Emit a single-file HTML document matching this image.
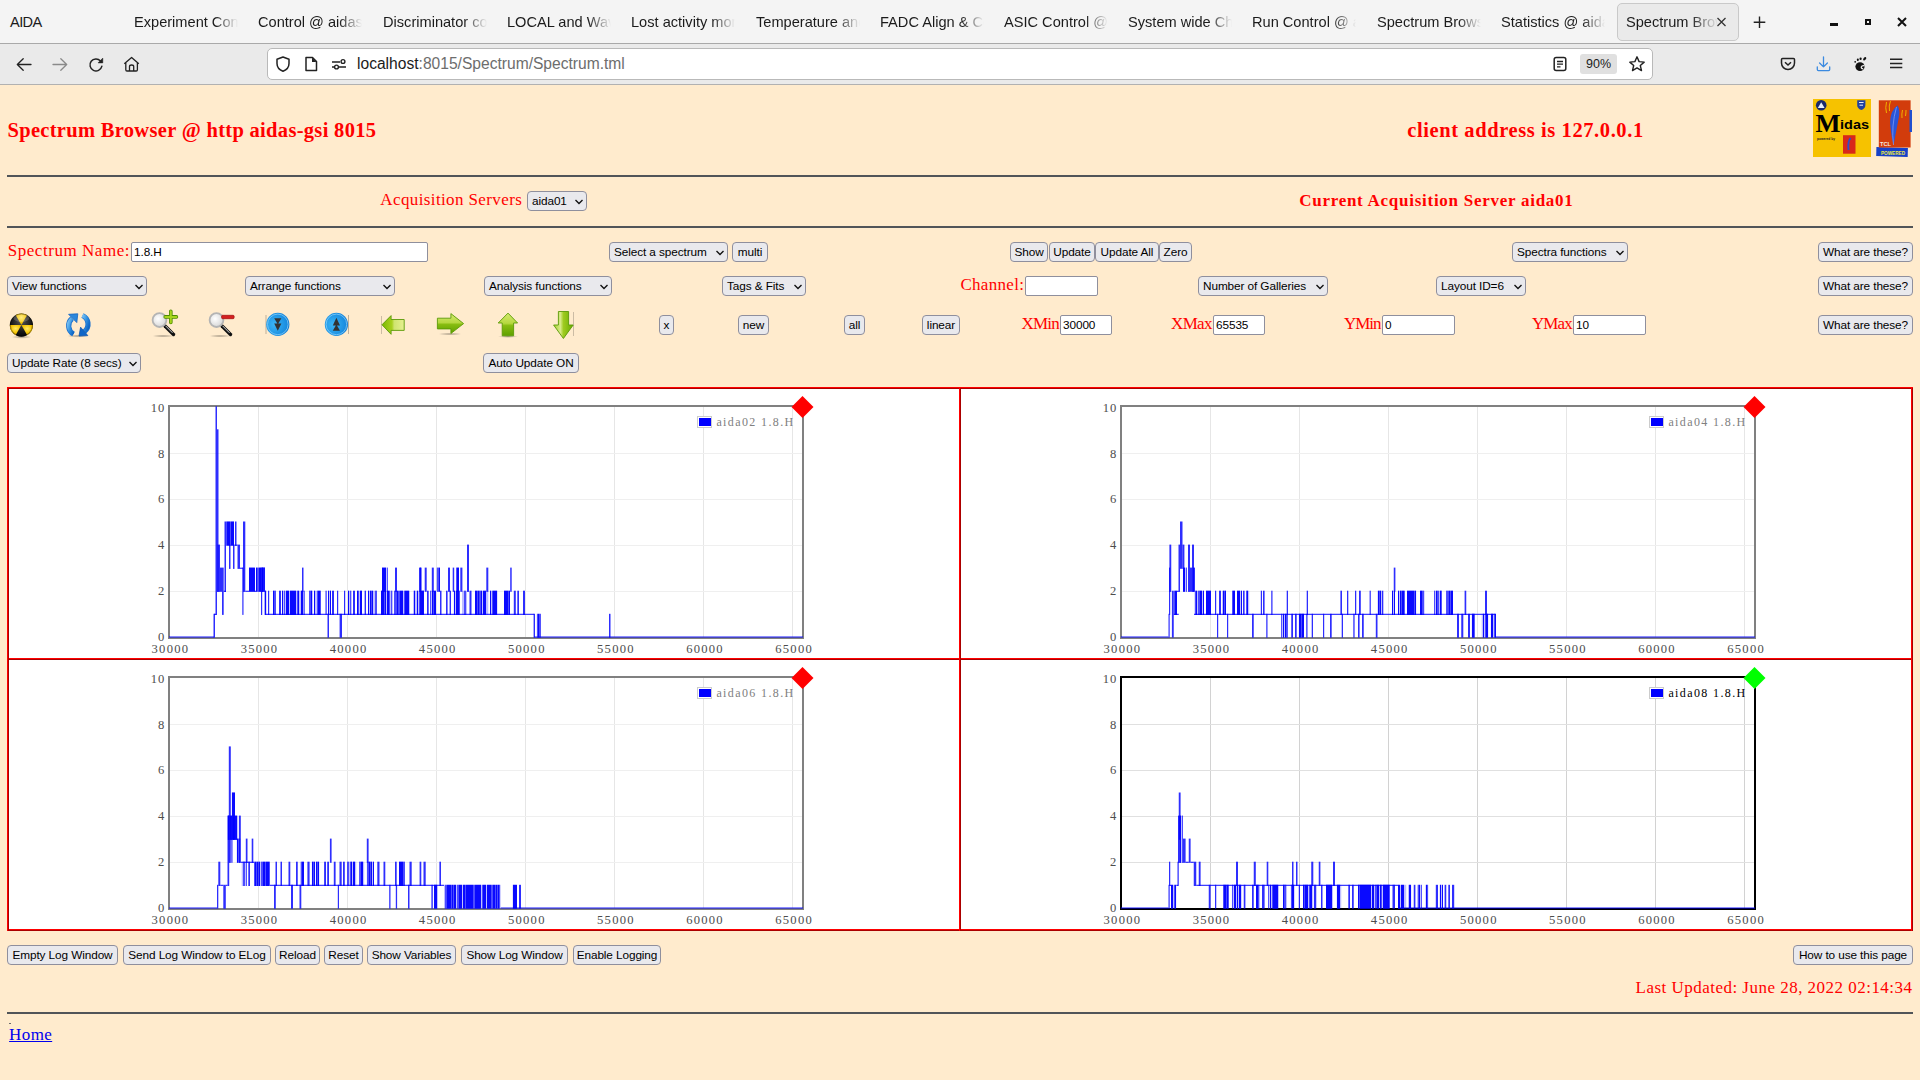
<!DOCTYPE html>
<html><head><meta charset="utf-8"><title>Spectrum Browser</title>
<style>
*{box-sizing:border-box}
html,body{margin:0;padding:0;width:1920px;height:1080px;overflow:hidden;background:#ffebcd;font-family:"Liberation Sans",sans-serif}
.a{position:absolute}
.t{position:absolute;font-family:"Liberation Serif",serif;line-height:1;white-space:nowrap}
.b,.s,.i{position:absolute;border:1px solid #8f8f9d;background:#e9e9ed;font-size:11.8px;letter-spacing:-0.1px;line-height:18px;color:#000;white-space:nowrap}
.b{border-radius:4px;text-align:center}
.s{border-radius:4px;padding-left:4px;overflow:hidden}
.i{background:#fff;border-radius:2px;padding-left:2px}
.chev{position:absolute;top:6px}
.tab{position:absolute;top:0;height:43px;font-size:14.6px;color:#1b1b1b;white-space:nowrap;overflow:hidden}
.tab span{position:absolute;left:0;top:13.7px;line-height:17px;-webkit-mask-image:linear-gradient(to right,#000 0,#000 78%,transparent 100%);width:104px;overflow:hidden;display:block}
.hr{position:absolute;left:7px;width:1906px;height:2px;background:#515458}
.cl{position:absolute;background:#f00}
.cd{position:absolute;background:#a00}
.cell{position:absolute;background:#fff}
</style></head><body>

<div class="a" style="left:0;top:0;width:1920px;height:43px;background:#f4f4f4"></div>
<div class="a" style="left:0;top:43px;width:1920px;height:1px;background:#a9a9a9"></div>
<div class="a" style="left:0;top:44px;width:1920px;height:40px;background:#eaeaea"></div>
<div class="a" style="left:0;top:84px;width:1920px;height:1px;background:#b1b1b1"></div>
<div class="a" style="left:10px;top:13.7px;font-size:14.6px;line-height:17px;color:#1b1b1b;letter-spacing:-0.6px">AIDA</div>
<div class="tab" style="left:134px;width:106px"><span>Experiment Control @ aidas</span></div>
<div class="tab" style="left:258px;width:106px"><span>Control @ aidas-gsi</span></div>
<div class="tab" style="left:383px;width:106px"><span>Discriminator control</span></div>
<div class="tab" style="left:507px;width:106px"><span>LOCAL and Wave</span></div>
<div class="tab" style="left:631px;width:106px"><span>Lost activity monitor</span></div>
<div class="tab" style="left:756px;width:106px"><span>Temperature and</span></div>
<div class="tab" style="left:880px;width:106px"><span>FADC Align &amp; Control</span></div>
<div class="tab" style="left:1004px;width:106px"><span>ASIC Control @ aidas</span></div>
<div class="tab" style="left:1128px;width:106px"><span>System wide Checks</span></div>
<div class="tab" style="left:1252px;width:106px"><span>Run Control @ aidas</span></div>
<div class="tab" style="left:1377px;width:106px"><span>Spectrum Browser</span></div>
<div class="tab" style="left:1501px;width:106px"><span>Statistics @ aidas</span></div>
<div class="a" style="left:1617px;top:3px;width:122px;height:38px;background:#eaeaea;border:1px solid #c9c9c9;border-radius:5px"></div>
<div class="tab" style="left:1626px;width:92px"><span style="width:92px;-webkit-mask-image:linear-gradient(to right,#000 0,#000 70%,transparent 100%)">Spectrum Browser</span></div>
<svg class="a" style="left:1714px;top:15px" width="16" height="14" viewBox="0 0 16 14"><path d="M3.5 3 L11.5 11 M11.5 3 L3.5 11" stroke="#333" stroke-width="1.3"/></svg>
<svg class="a" style="left:1751px;top:14px" width="16" height="16" viewBox="0 0 16 16"><path d="M8.5 2.5 V14 M2.7 8.3 H14.3" stroke="#222" stroke-width="1.4"/></svg>
<div class="a" style="left:1830px;top:23px;width:8px;height:3px;background:#111"></div>
<div class="a" style="left:1865px;top:19px;width:6px;height:6px;border:2px solid #111"></div>
<svg class="a" style="left:1896px;top:16px" width="12" height="12" viewBox="0 0 12 12"><path d="M2 2 L10 10 M10 2 L2 10" stroke="#111" stroke-width="2"/></svg>
<svg class="a" style="left:14px;top:54px" width="20" height="20" viewBox="0 0 20 20"><path d="M17 10.5 H3.5 M9.2 4.8 L3.3 10.5 L9.2 16.2" fill="none" stroke="#222" stroke-width="1.3" stroke-linecap="round" stroke-linejoin="round"/></svg>
<svg class="a" style="left:50px;top:54px" width="20" height="20" viewBox="0 0 20 20"><path d="M3 10.5 H16.5 M10.8 4.8 L16.7 10.5 L10.8 16.2" fill="none" stroke="#8a8a8a" stroke-width="1.3" stroke-linecap="round" stroke-linejoin="round"/></svg>
<svg class="a" style="left:86px;top:54px" width="20" height="20" viewBox="0 0 20 20"><path d="M14.46 6.89 A6.0 6.0 0 1 0 15.82 12.35" fill="none" stroke="#222" stroke-width="1.5" stroke-linecap="round"/><path d="M16.8 4.1 L16.8 8.9 L12 8.9 Z" fill="#222" stroke="#222" stroke-width="0.5" stroke-linejoin="round"/></svg>
<svg class="a" style="left:121px;top:54px" width="20" height="20" viewBox="0 0 20 20"><path d="M3.3 9.8 L10.6 3.4 L17.8 9.8 M4.8 8.8 V15.8 Q4.8 17 6 17 H15.2 Q16.4 17 16.4 15.8 V8.8 M8.5 17 V12.6 Q8.5 11 10.6 11 Q12.7 11 12.7 12.6 V17" fill="none" stroke="#222" stroke-width="1.3" stroke-linejoin="round"/></svg>
<div class="a" style="left:267px;top:48px;width:1386px;height:32px;background:#fff;border:1px solid #b9b9b9;border-radius:5px"></div>
<svg class="a" style="left:274px;top:55px" width="18" height="18" viewBox="0 0 18 18"><path d="M9 2 L15 4.2 V8.5 C15 12.5 12.3 15 9 16.3 C5.7 15 3 12.5 3 8.5 V4.2 Z" fill="none" stroke="#222" stroke-width="1.5" stroke-linejoin="round"/></svg>
<svg class="a" style="left:303px;top:55px" width="16" height="18" viewBox="0 0 16 18"><path d="M3 2.5 H9.5 L13.5 6.5 V15.5 H3 Z" fill="none" stroke="#222" stroke-width="1.5" stroke-linejoin="round"/><path d="M9 2.5 V7 H13.5" fill="#222"/></svg>
<svg class="a" style="left:330px;top:55px" width="18" height="18" viewBox="0 0 18 18"><path d="M2 7 H10 M2 12 H4 M9 12 H16" stroke="#222" stroke-width="1.5"/><circle cx="13" cy="6.5" r="1.9" fill="none" stroke="#222" stroke-width="1.4"/><circle cx="6.5" cy="12" r="1.9" fill="none" stroke="#222" stroke-width="1.4"/></svg>
<div class="a" style="left:357px;top:55px;font-size:15.6px;line-height:17px;color:#1b1b1b;white-space:nowrap">localhost<span style="color:#6d6d6d">:8015/Spectrum/Spectrum.tml</span></div>
<svg class="a" style="left:1551px;top:55px" width="18" height="18" viewBox="0 0 18 18"><rect x="3.2" y="2.5" width="11.6" height="13" rx="2" fill="none" stroke="#222" stroke-width="1.5"/><path d="M6 6.5 H12 M6 9.2 H12 M6 11.9 H9.5" stroke="#222" stroke-width="1.3"/></svg>
<div class="a" style="left:1580px;top:54px;width:37px;height:20px;background:#e0e0e0;border-radius:3px;font-size:12.5px;line-height:20px;text-align:center;color:#1b1b1b">90%</div>
<svg class="a" style="left:1628px;top:55px" width="18" height="18" viewBox="0 0 18 18"><path d="M9 1.8 L11.1 6.6 L16.2 7.1 L12.3 10.5 L13.5 15.6 L9 12.9 L4.5 15.6 L5.7 10.5 L1.8 7.1 L6.9 6.6 Z" fill="none" stroke="#222" stroke-width="1.4" stroke-linejoin="round"/></svg>
<svg class="a" style="left:1779px;top:55px" width="18" height="18" viewBox="0 0 18 18"><path d="M3.5 3.5 H14.5 Q15.5 3.5 15.5 4.5 V8 A6.5 6.5 0 0 1 2.5 8 V4.5 Q2.5 3.5 3.5 3.5 Z" fill="none" stroke="#222" stroke-width="1.5"/><path d="M6 7.2 L9 10 L12 7.2" fill="none" stroke="#222" stroke-width="1.5"/></svg>
<svg class="a" style="left:1814px;top:55px" width="18" height="18" viewBox="0 0 18 18"><path d="M9.5 2 V11.8 M5.6 8 L9.5 11.9 L13.4 8 M3.3 11.8 V14.5 Q3.3 15.6 4.4 15.6 H14.6 Q15.7 15.6 15.7 14.5 V11.8" fill="none" stroke="#3b8ae0" stroke-width="1.3" stroke-linecap="round" stroke-linejoin="round"/></svg>
<svg class="a" style="left:1851px;top:55px" width="18" height="18" viewBox="0 0 18 18"><ellipse cx="9" cy="11.6" rx="4.6" ry="4.4" fill="#111"/><path d="M13.6 10.8 Q11 10.2 10.3 12 Q10 13.6 12.2 13.8" fill="none" stroke="#eaeaea" stroke-width="1.3"/><circle cx="4.2" cy="6.8" r="0.9" fill="#111"/><ellipse cx="6.8" cy="4.8" rx="1" ry="1.2" fill="#111"/><ellipse cx="9.6" cy="3.7" rx="1.1" ry="1.3" fill="#111"/><ellipse cx="13.7" cy="3.7" rx="1.2" ry="2" transform="rotate(40 13.7 3.7)" fill="#111"/></svg>
<svg class="a" style="left:1887px;top:55px" width="18" height="18" viewBox="0 0 18 18"><path d="M3 4.3 H15.3 M3 8.5 H15.3 M3 12.5 H15.3" stroke="#222" stroke-width="1.4"/></svg>
<div class="t" style="left:7.5px;top:120.13px;font-size:20.5px;font-weight:bold;letter-spacing:0.307px;color:#f00;">Spectrum Browser @ http aidas-gsi 8015</div>
<div class="t" style="left:1407.3px;top:120.03px;font-size:20.5px;font-weight:bold;letter-spacing:0.588px;color:#f00;">client address is 127.0.0.1</div>
<div class="hr" style="top:175px"></div>
<div class="t" style="left:380.3px;top:190.76px;font-size:17px;font-weight:normal;letter-spacing:0.387px;color:#f00;">Acquisition Servers</div>
<div class="s" style="left:527px;top:191px;width:60px;height:20px"><span>aida01</span><svg class="chev" style="left:46px" width="10" height="8" viewBox="0 0 10 8"><path d="M1.5 2 L5 5.5 L8.5 2" fill="none" stroke="#111" stroke-width="1.35"/></svg></div>
<div class="t" style="left:1299.2px;top:191.56px;font-size:17px;font-weight:bold;letter-spacing:0.735px;color:#f00;">Current Acquisition Server aida01</div>
<div class="hr" style="top:226px"></div>
<div class="t" style="left:7.75px;top:241.76px;font-size:17px;font-weight:normal;letter-spacing:0.538px;color:#f00;">Spectrum Name:</div>
<div class="i" style="left:131px;top:242px;width:297px;height:20px">1.8.H</div>
<div class="s" style="left:609px;top:242px;width:119px;height:20px"><span>Select a spectrum</span><svg class="chev" style="left:105px" width="10" height="8" viewBox="0 0 10 8"><path d="M1.5 2 L5 5.5 L8.5 2" fill="none" stroke="#111" stroke-width="1.35"/></svg></div>
<div class="b" style="left:732px;top:242px;width:36px;height:20px">multi</div>
<div class="b" style="left:1010px;top:242px;width:38px;height:20px">Show</div>
<div class="b" style="left:1049px;top:242px;width:46px;height:20px">Update</div>
<div class="b" style="left:1095px;top:242px;width:64px;height:20px">Update All</div>
<div class="b" style="left:1159px;top:242px;width:33px;height:20px">Zero</div>
<div class="s" style="left:1512px;top:242px;width:116px;height:20px"><span>Spectra functions</span><svg class="chev" style="left:102px" width="10" height="8" viewBox="0 0 10 8"><path d="M1.5 2 L5 5.5 L8.5 2" fill="none" stroke="#111" stroke-width="1.35"/></svg></div>
<div class="b" style="left:1818px;top:242px;width:95px;height:20px">What are these?</div>
<div class="s" style="left:7px;top:276px;width:140px;height:20px"><span>View functions</span><svg class="chev" style="left:126px" width="10" height="8" viewBox="0 0 10 8"><path d="M1.5 2 L5 5.5 L8.5 2" fill="none" stroke="#111" stroke-width="1.35"/></svg></div>
<div class="s" style="left:245px;top:276px;width:150px;height:20px"><span>Arrange functions</span><svg class="chev" style="left:136px" width="10" height="8" viewBox="0 0 10 8"><path d="M1.5 2 L5 5.5 L8.5 2" fill="none" stroke="#111" stroke-width="1.35"/></svg></div>
<div class="s" style="left:484px;top:276px;width:128px;height:20px"><span>Analysis functions</span><svg class="chev" style="left:114px" width="10" height="8" viewBox="0 0 10 8"><path d="M1.5 2 L5 5.5 L8.5 2" fill="none" stroke="#111" stroke-width="1.35"/></svg></div>
<div class="s" style="left:722px;top:276px;width:84px;height:20px"><span>Tags &amp; Fits</span><svg class="chev" style="left:70px" width="10" height="8" viewBox="0 0 10 8"><path d="M1.5 2 L5 5.5 L8.5 2" fill="none" stroke="#111" stroke-width="1.35"/></svg></div>
<div class="t" style="left:960.4px;top:275.76px;font-size:17px;font-weight:normal;letter-spacing:0.318px;color:#f00;">Channel:</div>
<div class="i" style="left:1025px;top:276px;width:73px;height:20px"></div>
<div class="s" style="left:1198px;top:276px;width:130px;height:20px"><span>Number of Galleries</span><svg class="chev" style="left:116px" width="10" height="8" viewBox="0 0 10 8"><path d="M1.5 2 L5 5.5 L8.5 2" fill="none" stroke="#111" stroke-width="1.35"/></svg></div>
<div class="s" style="left:1436px;top:276px;width:90px;height:20px"><span>Layout ID=6</span><svg class="chev" style="left:76px" width="10" height="8" viewBox="0 0 10 8"><path d="M1.5 2 L5 5.5 L8.5 2" fill="none" stroke="#111" stroke-width="1.35"/></svg></div>
<div class="b" style="left:1818px;top:276px;width:95px;height:20px">What are these?</div>
<div class="b" style="left:659px;top:315px;width:15px;height:20px">x</div>
<div class="b" style="left:738px;top:315px;width:31px;height:20px">new</div>
<div class="b" style="left:844px;top:315px;width:21px;height:20px">all</div>
<div class="b" style="left:922px;top:315px;width:38px;height:20px">linear</div>
<div class="t" style="left:1021.4px;top:314.51px;font-size:17px;font-weight:normal;letter-spacing:-0.736px;color:#f00;">XMin</div>
<div class="i" style="left:1060px;top:315px;width:52px;height:20px">30000</div>
<div class="t" style="left:1171px;top:314.51px;font-size:17px;font-weight:normal;letter-spacing:-0.646px;color:#f00;">XMax</div>
<div class="i" style="left:1213px;top:315px;width:52px;height:20px">65535</div>
<div class="t" style="left:1344px;top:314.51px;font-size:17px;font-weight:normal;letter-spacing:-1.036px;color:#f00;">YMin</div>
<div class="i" style="left:1382px;top:315px;width:73px;height:20px">0</div>
<div class="t" style="left:1531.9px;top:314.51px;font-size:17px;font-weight:normal;letter-spacing:-0.846px;color:#f00;">YMax</div>
<div class="i" style="left:1573px;top:315px;width:73px;height:20px">10</div>
<div class="b" style="left:1818px;top:315px;width:95px;height:20px">What are these?</div>
<svg class="a" style="left:0;top:300px" width="600" height="45" viewBox="0 300 600 45">
<defs>
<radialGradient id="gy" cx="0.5" cy="0.35" r="0.7"><stop offset="0" stop-color="#ffe866"/><stop offset="0.6" stop-color="#f5c400"/><stop offset="1" stop-color="#c99500"/></radialGradient>
<radialGradient id="gk" cx="0.5" cy="0.35" r="0.7"><stop offset="0" stop-color="#555"/><stop offset="0.6" stop-color="#1a1a1a"/><stop offset="1" stop-color="#000"/></radialGradient>
<linearGradient id="gb" x1="0" y1="0" x2="1" y2="1"><stop offset="0" stop-color="#7cc4f4"/><stop offset="0.5" stop-color="#2f8fe0"/><stop offset="1" stop-color="#0a5fc0"/></linearGradient>
<radialGradient id="gbt" cx="0.35" cy="0.5" r="0.75"><stop offset="0" stop-color="#3cb6f6"/><stop offset="0.7" stop-color="#1a8de0"/><stop offset="1" stop-color="#0a6cc8"/></radialGradient>
<linearGradient id="gg" x1="0" y1="0" x2="0" y2="1"><stop offset="0" stop-color="#d5ea70"/><stop offset="0.45" stop-color="#b6d840"/><stop offset="0.55" stop-color="#86bc10"/><stop offset="1" stop-color="#5fa000"/></linearGradient>
<linearGradient id="ggh" x1="0" y1="0" x2="1" y2="0"><stop offset="0" stop-color="#7ab800"/><stop offset="0.45" stop-color="#a9d020"/><stop offset="0.55" stop-color="#cfe470"/><stop offset="1" stop-color="#e6f090"/></linearGradient>
<linearGradient id="ggd" x1="0" y1="0" x2="1" y2="0"><stop offset="0" stop-color="#a6cf30"/><stop offset="0.35" stop-color="#d8ea88"/><stop offset="0.5" stop-color="#9fcb20"/><stop offset="1" stop-color="#6aac00"/></linearGradient>
<radialGradient id="glens" cx="0.4" cy="0.4" r="0.6"><stop offset="0" stop-color="#fff"/><stop offset="1" stop-color="#d8d8d8"/></radialGradient>
<radialGradient id="gsh"><stop offset="0" stop-color="#000" stop-opacity="0.35"/><stop offset="1" stop-color="#000" stop-opacity="0"/></radialGradient>
</defs>
<!-- radiation -->
<ellipse cx="21.5" cy="337" rx="10" ry="1.8" fill="url(#gsh)"/>
<circle cx="21.4" cy="325.1" r="11.6" fill="url(#gk)"/>
<path d="M21.4 325.1 L15.6 315.05 A11.6 11.6 0 0 1 27.2 315.05 Z" fill="url(#gy)"/>
<path d="M21.4 325.1 L9.8 325.1 A11.6 11.6 0 0 0 15.6 335.15 Z" fill="url(#gy)"/>
<path d="M21.4 325.1 L33 325.1 A11.6 11.6 0 0 1 27.2 335.15 Z" fill="url(#gy)"/>
<ellipse cx="21.4" cy="318" rx="8" ry="4" fill="#fff" fill-opacity="0.18"/>
<circle cx="21.4" cy="325.1" r="11.1" fill="none" stroke="#000" stroke-opacity="0.35" stroke-width="1"/>
<!-- refresh -->
<ellipse cx="78" cy="336" rx="11" ry="1.6" fill="url(#gsh)"/>
<path d="M73.5 334 A9.5 9.5 0 0 1 72 318.5" fill="none" stroke="#1f73cf" stroke-width="5.2"/>
<path d="M73.5 334 A9.5 9.5 0 0 1 72 318.5" fill="none" stroke="url(#gb)" stroke-width="3.6"/>
<path d="M68.6 314.3 L77.8 313.8 L76.8 322.6 Z" fill="#2b87dc" stroke="#1565c0" stroke-width="0.8" stroke-linejoin="round"/>
<path d="M82.5 315.5 A9.5 9.5 0 0 1 84.5 331.5" fill="none" stroke="#1f73cf" stroke-width="5.2"/>
<path d="M82.5 315.5 A9.5 9.5 0 0 1 84.5 331.5" fill="none" stroke="url(#gb)" stroke-width="3.6"/>
<path d="M87.8 335.6 L79 336 L80.6 327.2 Z" fill="#0f66c8" stroke="#0b55b0" stroke-width="0.8" stroke-linejoin="round"/>
<!-- zoom in -->
<ellipse cx="163" cy="336" rx="11" ry="1.5" fill="url(#gsh)"/>
<line x1="165" y1="326" x2="173.5" y2="334.5" stroke="#111" stroke-width="3.4" stroke-linecap="round"/>
<line x1="165.5" y1="325.8" x2="172.5" y2="332.8" stroke="#eee" stroke-width="0.9"/>
<circle cx="159.5" cy="320.1" r="6.9" fill="url(#glens)" stroke="#b4b4b4" stroke-width="1.8"/>
<path d="M170.8 311.3 V322.5 M165.2 316.9 H176.4" stroke="#4e8a00" stroke-width="3.6" stroke-linecap="round"/>
<path d="M170.8 311.3 V322.5 M165.2 316.9 H176.4" stroke="#a6d41c" stroke-width="2" stroke-linecap="round"/>
<!-- zoom out -->
<ellipse cx="220" cy="336" rx="11" ry="1.5" fill="url(#gsh)"/>
<line x1="222" y1="326" x2="230.5" y2="334.5" stroke="#111" stroke-width="3.4" stroke-linecap="round"/>
<line x1="222.5" y1="325.8" x2="229.5" y2="332.8" stroke="#eee" stroke-width="0.9"/>
<circle cx="216.5" cy="320.1" r="6.9" fill="url(#glens)" stroke="#b4b4b4" stroke-width="1.8"/>
<rect x="221.6" y="315.3" width="12.5" height="3.4" rx="1" fill="#d42020" stroke="#a01010" stroke-width="0.7"/>
<!-- blue down -->
<line x1="266" y1="315" x2="266" y2="334" stroke="#000" stroke-opacity="0.25" stroke-width="1"/>
<circle cx="277.8" cy="324.4" r="11.6" fill="url(#gbt)"/>
<circle cx="277.8" cy="324.4" r="10.3" fill="none" stroke="#9edcff" stroke-opacity="0.7" stroke-width="0.9"/>
<path d="M274.2 318.3 H281.4 L277.8 324.3 Z M274.2 323.4 H281.4 L277.8 330.8 Z" fill="#333"/>
<!-- blue up -->
<line x1="348.5" y1="315" x2="348.5" y2="334" stroke="#000" stroke-opacity="0.25" stroke-width="1"/>
<circle cx="336.4" cy="324.4" r="11.6" fill="url(#gbt)"/>
<circle cx="336.4" cy="324.4" r="10.3" fill="none" stroke="#9edcff" stroke-opacity="0.7" stroke-width="0.9"/>
<path d="M332.8 330.8 H340 L336.4 324.6 Z M332.8 325.5 H340 L336.4 317.8 Z" fill="#333"/>
<!-- left arrow -->
<line x1="381.5" y1="316" x2="381.5" y2="334" stroke="#000" stroke-opacity="0.2" stroke-width="1"/>
<path d="M382 324.75 L391.1 315.6 V319.5 H404.2 V330.4 H391.1 V334.3 Z" fill="url(#ggh)" stroke="#5a9a08" stroke-width="0.9" stroke-linejoin="round"/>
<!-- right arrow -->
<ellipse cx="450" cy="334" rx="12" ry="1.4" fill="url(#gsh)"/>
<path d="M463.6 323.6 L450.9 313.6 V318.2 H437.4 V328.9 H450.9 V333.5 Z" fill="url(#gg)" stroke="#5a9a08" stroke-width="0.9" stroke-linejoin="round"/>
<!-- up arrow -->
<ellipse cx="508" cy="336.5" rx="10" ry="1.4" fill="url(#gsh)"/>
<path d="M508 313.1 L517.6 323 H513.6 V335.8 H502.2 V323 H498.2 Z" fill="url(#gg)" stroke="#5a9a08" stroke-width="0.9" stroke-linejoin="round"/>
<!-- down arrow -->
<line x1="573.5" y1="312" x2="573.5" y2="336" stroke="#000" stroke-opacity="0.2" stroke-width="1"/>
<path d="M563.4 338.5 L573.2 325 H568.6 V311.5 H558.4 V325 H553.6 Z" fill="url(#ggd)" stroke="#5a9a08" stroke-width="0.9" stroke-linejoin="round"/>
</svg>
<svg class="a" style="left:1800px;top:94px" width="120" height="66" viewBox="1800 94 120 66">
<rect x="1813" y="99" width="58" height="58" fill="#f6c200"/>
<circle cx="1821.2" cy="105.3" r="5.3" fill="#1b2a6b"/>
<path d="M1817.8 108 L1821.2 102.3 L1824.6 108 Z" fill="#e8eef8"/>
<path d="M1857.2 100.2 H1865.4 V105 Q1865.4 108.6 1861.3 110 Q1857.2 108.6 1857.2 105 Z" fill="#2040a0"/>
<path d="M1859 102.5 H1863.6 M1859.5 105.2 H1863 " stroke="#fff" stroke-width="0.9"/>
<text x="1815.5" y="131.5" font-family="Liberation Serif" font-weight="bold" font-size="25" fill="#000" textLength="25" lengthAdjust="spacingAndGlyphs">M</text>
<text x="1840" y="129.3" font-family="Liberation Sans" font-weight="bold" font-size="12.5" fill="#000" textLength="29" lengthAdjust="spacingAndGlyphs">idas</text>
<text x="1817" y="140" font-family="Liberation Sans" font-weight="bold" font-size="3.5" fill="#222" textLength="18" lengthAdjust="spacingAndGlyphs">powered by</text>
<rect x="1843" y="135.2" width="12.5" height="18.5" fill="#d8281a"/>
<path d="M1850.5 138 Q1847.5 142 1848.5 150" stroke="#2a4fd0" stroke-width="1.8" fill="none"/>
<rect x="1876.3" y="147.5" width="31.5" height="9" fill="#1640c8" transform="rotate(1.5 1892 152)"/>
<rect x="1878.8" y="100.3" width="31.8" height="47.2" fill="#d23c0c"/>
<rect x="1909.5" y="110" width="2.5" height="22" fill="#2050d0"/>
<path d="M1897.5 105.5 Q1888.5 112 1890.5 128 Q1891.5 137 1893.5 145 Q1896 132 1898 122 Q1901 110 1897.5 105.5 Z" fill="#2a55d8"/>
<path d="M1893.5 145 Q1891 126 1896.5 107" stroke="#9bb4ff" stroke-width="0.6" fill="none"/>
<path d="M1886.5 102 Q1885 108 1886.5 113 M1890.5 101 Q1888.5 106 1889.5 111 M1902.5 110 Q1901.5 114 1902 118 M1906 110 Q1906 113 1905.5 116" stroke="#f0b000" stroke-width="1" fill="none"/>
<text x="1880" y="146" font-family="Liberation Sans" font-weight="bold" font-size="5.5" fill="#f4e8e0" textLength="11" lengthAdjust="spacingAndGlyphs">TCL</text>
<text x="1881" y="155" font-family="Liberation Sans" font-weight="bold" font-size="6" fill="#f0ea40" textLength="24" lengthAdjust="spacingAndGlyphs">POWERED</text>
</svg>
<div class="s" style="left:7px;top:353px;width:134px;height:20px"><span>Update Rate (8 secs)</span><svg class="chev" style="left:120px" width="10" height="8" viewBox="0 0 10 8"><path d="M1.5 2 L5 5.5 L8.5 2" fill="none" stroke="#111" stroke-width="1.35"/></svg></div>
<div class="b" style="left:483px;top:353px;width:96px;height:20px">Auto Update ON</div>
<div class="cell" style="left:9px;top:389px;width:1902px;height:540px"></div>
<div class="cl" style="left:7px;top:387px;width:1906px;height:1px"></div>
<div class="cd" style="left:8px;top:388px;width:1905px;height:1px"></div>
<div class="cl" style="left:7px;top:658px;width:1906px;height:1px"></div>
<div class="cd" style="left:8px;top:659px;width:1905px;height:1px"></div>
<div class="cl" style="left:7px;top:929px;width:1906px;height:1px"></div>
<div class="cd" style="left:8px;top:930px;width:1905px;height:1px"></div>
<div class="cl" style="left:7px;top:387px;width:1px;height:544px"></div>
<div class="cd" style="left:8px;top:388px;width:1px;height:543px"></div>
<div class="cl" style="left:959px;top:387px;width:1px;height:544px"></div>
<div class="cd" style="left:960px;top:388px;width:1px;height:543px"></div>
<div class="cl" style="left:1911px;top:387px;width:1px;height:544px"></div>
<div class="cd" style="left:1912px;top:388px;width:1px;height:543px"></div>
<div class="b" style="left:7px;top:945px;width:111px;height:20px">Empty Log Window</div>
<div class="b" style="left:123px;top:945px;width:148px;height:20px">Send Log Window to ELog</div>
<div class="b" style="left:275px;top:945px;width:45px;height:20px">Reload</div>
<div class="b" style="left:324px;top:945px;width:39px;height:20px">Reset</div>
<div class="b" style="left:367px;top:945px;width:89px;height:20px">Show Variables</div>
<div class="b" style="left:461px;top:945px;width:107px;height:20px">Show Log Window</div>
<div class="b" style="left:573px;top:945px;width:88px;height:20px">Enable Logging</div>
<div class="b" style="left:1793px;top:945px;width:120px;height:20px">How to use this page</div>
<div class="t" style="left:1635.6px;top:978.86px;font-size:17px;font-weight:normal;letter-spacing:0.478px;color:#f00;">Last Updated: June 28, 2022 02:14:34</div>
<div class="hr" style="top:1012px"></div>
<div class="a" style="left:9px;top:1023px;width:2px;height:1px;background:#6a6a6a"></div>
<div class="t" style="left:9.1px;top:1026.06px;font-size:17px;font-weight:normal;letter-spacing:0.384px;color:#0000ee;text-decoration:underline">Home</div>
<svg class="a" style="left:0;top:0" width="1920" height="1080" viewBox="0 0 1920 1080"><line x1="258.5" y1="407" x2="258.5" y2="637" stroke="#e6e6e6" stroke-width="1"/>
<line x1="347.5" y1="407" x2="347.5" y2="637" stroke="#e6e6e6" stroke-width="1"/>
<line x1="436.5" y1="407" x2="436.5" y2="637" stroke="#e6e6e6" stroke-width="1"/>
<line x1="525.5" y1="407" x2="525.5" y2="637" stroke="#e6e6e6" stroke-width="1"/>
<line x1="614.5" y1="407" x2="614.5" y2="637" stroke="#e6e6e6" stroke-width="1"/>
<line x1="703.5" y1="407" x2="703.5" y2="637" stroke="#e6e6e6" stroke-width="1"/>
<line x1="792.5" y1="407" x2="792.5" y2="637" stroke="#e6e6e6" stroke-width="1"/>
<line x1="170" y1="591.5" x2="802" y2="591.5" stroke="#efefef" stroke-width="1"/>
<line x1="170" y1="545.5" x2="802" y2="545.5" stroke="#efefef" stroke-width="1"/>
<line x1="170" y1="499.5" x2="802" y2="499.5" stroke="#efefef" stroke-width="1"/>
<line x1="170" y1="453.5" x2="802" y2="453.5" stroke="#efefef" stroke-width="1"/>
<rect x="169" y="406" width="634" height="232" fill="none" stroke="#808080" stroke-width="2"/>
<rect x="213.50" y="613.8" width="1.50" height="23.9" fill="#0000ff" fill-opacity="0.82"/>
<rect x="215.50" y="406.3" width="1.50" height="208.7" fill="#0000ff" fill-opacity="0.82"/>
<rect x="217.00" y="429.3" width="1.50" height="162.6" fill="#0000ff" fill-opacity="0.82"/>
<rect x="217.50" y="544.6" width="2.50" height="47.3" fill="#0000ff" fill-opacity="0.82"/>
<rect x="220.00" y="567.6" width="2.00" height="24.2" fill="#0000ff" fill-opacity="0.82"/>
<rect x="222.00" y="567.6" width="1.70" height="47.3" fill="#0000ff" fill-opacity="0.82"/>
<rect x="224.50" y="521.5" width="1.50" height="70.4" fill="#0000ff" fill-opacity="0.82"/>
<rect x="226.00" y="521.5" width="8.00" height="24.2" fill="#0000ff" fill-opacity="0.25"/>
<rect x="226" y="521.5" width="1" height="24.2" fill="#0000ff" fill-opacity="0.6"/>
<rect x="227" y="521.5" width="1" height="24.2" fill="#0000ff" fill-opacity="0.95"/>
<rect x="228" y="521.5" width="1" height="24.2" fill="#0000ff" fill-opacity="0.95"/>
<rect x="229" y="521.5" width="1" height="24.2" fill="#0000ff" fill-opacity="0.95"/>
<rect x="230" y="521.5" width="1" height="24.2" fill="#0000ff" fill-opacity="0.6"/>
<rect x="231" y="521.5" width="1" height="24.2" fill="#0000ff" fill-opacity="0.95"/>
<rect x="232" y="521.5" width="1" height="24.2" fill="#0000ff" fill-opacity="0.95"/>
<rect x="233" y="521.5" width="1" height="24.2" fill="#0000ff" fill-opacity="0.95"/>
<rect x="229.00" y="544.6" width="1.50" height="24.3" fill="#0000ff" fill-opacity="0.82"/>
<rect x="233.00" y="544.6" width="1.50" height="24.3" fill="#0000ff" fill-opacity="0.82"/>
<rect x="235.00" y="521.5" width="1.50" height="24.2" fill="#0000ff" fill-opacity="0.82"/>
<rect x="237.50" y="544.6" width="2.50" height="24.3" fill="#0000ff" fill-opacity="0.82"/>
<rect x="242.30" y="567.6" width="1.20" height="47.3" fill="#0000ff" fill-opacity="0.82"/>
<rect x="243.00" y="521.5" width="2.30" height="70.4" fill="#0000ff" fill-opacity="0.82"/>
<rect x="249.00" y="567.6" width="5.50" height="24.2" fill="#0000ff" fill-opacity="0.25"/>
<rect x="249" y="567.6" width="1" height="24.2" fill="#0000ff" fill-opacity="0.95"/>
<rect x="250" y="567.6" width="1" height="24.2" fill="#0000ff" fill-opacity="0.95"/>
<rect x="251" y="567.6" width="1" height="24.2" fill="#0000ff" fill-opacity="0.95"/>
<rect x="252" y="567.6" width="1" height="24.2" fill="#0000ff" fill-opacity="0.95"/>
<rect x="253" y="567.6" width="1" height="24.2" fill="#0000ff" fill-opacity="0.95"/>
<rect x="254" y="567.6" width="1" height="24.2" fill="#0000ff" fill-opacity="0.95"/>
<rect x="256.00" y="567.6" width="2.60" height="24.2" fill="#0000ff" fill-opacity="0.25"/>
<rect x="256" y="567.6" width="1" height="24.2" fill="#0000ff" fill-opacity="0.95"/>
<rect x="257" y="567.6" width="1" height="24.2" fill="#0000ff" fill-opacity="0.6"/>
<rect x="258" y="567.6" width="1" height="24.2" fill="#0000ff" fill-opacity="0.6"/>
<rect x="259.00" y="567.6" width="6.00" height="24.2" fill="#0000ff" fill-opacity="0.25"/>
<rect x="259" y="567.6" width="1" height="24.2" fill="#0000ff" fill-opacity="0.95"/>
<rect x="260" y="567.6" width="1" height="24.2" fill="#0000ff" fill-opacity="0.95"/>
<rect x="261" y="567.6" width="1" height="24.2" fill="#0000ff" fill-opacity="0.6"/>
<rect x="262" y="567.6" width="1" height="24.2" fill="#0000ff" fill-opacity="0.95"/>
<rect x="263" y="567.6" width="1" height="24.2" fill="#0000ff" fill-opacity="0.6"/>
<rect x="264" y="567.6" width="1" height="24.2" fill="#0000ff" fill-opacity="0.6"/>
<rect x="261.00" y="590.7" width="1.20" height="24.3" fill="#0000ff" fill-opacity="0.82"/>
<rect x="264.60" y="590.7" width="1.40" height="24.3" fill="#0000ff" fill-opacity="0.82"/>
<rect x="265.00" y="590.7" width="1.20" height="24.3" fill="#0000ff" fill-opacity="0.82"/>
<rect x="268.00" y="590.7" width="1.20" height="24.3" fill="#0000ff" fill-opacity="0.82"/>
<rect x="273.00" y="590.7" width="3.00" height="24.3" fill="#0000ff" fill-opacity="0.25"/>
<rect x="273" y="590.7" width="1" height="24.3" fill="#0000ff" fill-opacity="0.95"/>
<rect x="274" y="590.7" width="1" height="24.3" fill="#0000ff" fill-opacity="0.6"/>
<rect x="275" y="590.7" width="1" height="24.3" fill="#0000ff" fill-opacity="0.6"/>
<rect x="279.00" y="590.7" width="2.00" height="24.3" fill="#0000ff" fill-opacity="0.82"/>
<rect x="282.00" y="590.7" width="20.50" height="24.3" fill="#0000ff" fill-opacity="0.25"/>
<rect x="282" y="590.7" width="1" height="24.3" fill="#0000ff" fill-opacity="0.95"/>
<rect x="284" y="590.7" width="1" height="24.3" fill="#0000ff" fill-opacity="0.6"/>
<rect x="286" y="590.7" width="1" height="24.3" fill="#0000ff" fill-opacity="0.95"/>
<rect x="287" y="590.7" width="1" height="24.3" fill="#0000ff" fill-opacity="0.95"/>
<rect x="288" y="590.7" width="1" height="24.3" fill="#0000ff" fill-opacity="0.95"/>
<rect x="290" y="590.7" width="1" height="24.3" fill="#0000ff" fill-opacity="0.95"/>
<rect x="291" y="590.7" width="1" height="24.3" fill="#0000ff" fill-opacity="0.95"/>
<rect x="292" y="590.7" width="1" height="24.3" fill="#0000ff" fill-opacity="0.95"/>
<rect x="293" y="590.7" width="1" height="24.3" fill="#0000ff" fill-opacity="0.95"/>
<rect x="294" y="590.7" width="1" height="24.3" fill="#0000ff" fill-opacity="0.95"/>
<rect x="295" y="590.7" width="1" height="24.3" fill="#0000ff" fill-opacity="0.95"/>
<rect x="297" y="590.7" width="1" height="24.3" fill="#0000ff" fill-opacity="0.6"/>
<rect x="298" y="590.7" width="1" height="24.3" fill="#0000ff" fill-opacity="0.95"/>
<rect x="301" y="590.7" width="1" height="24.3" fill="#0000ff" fill-opacity="0.95"/>
<rect x="302" y="590.7" width="1" height="24.3" fill="#0000ff" fill-opacity="0.95"/>
<rect x="303.50" y="590.7" width="1.20" height="24.3" fill="#0000ff" fill-opacity="0.82"/>
<rect x="309.00" y="590.7" width="4.00" height="24.3" fill="#0000ff" fill-opacity="0.25"/>
<rect x="309" y="590.7" width="1" height="24.3" fill="#0000ff" fill-opacity="0.6"/>
<rect x="310" y="590.7" width="1" height="24.3" fill="#0000ff" fill-opacity="0.6"/>
<rect x="311" y="590.7" width="1" height="24.3" fill="#0000ff" fill-opacity="0.95"/>
<rect x="314.00" y="590.7" width="7.00" height="24.3" fill="#0000ff" fill-opacity="0.25"/>
<rect x="314" y="590.7" width="1" height="24.3" fill="#0000ff" fill-opacity="0.95"/>
<rect x="317" y="590.7" width="1" height="24.3" fill="#0000ff" fill-opacity="0.6"/>
<rect x="318" y="590.7" width="1" height="24.3" fill="#0000ff" fill-opacity="0.95"/>
<rect x="319" y="590.7" width="1" height="24.3" fill="#0000ff" fill-opacity="0.95"/>
<rect x="320" y="590.7" width="1" height="24.3" fill="#0000ff" fill-opacity="0.6"/>
<rect x="325.50" y="590.7" width="1.20" height="24.3" fill="#0000ff" fill-opacity="0.82"/>
<rect x="328.00" y="590.7" width="3.00" height="24.3" fill="#0000ff" fill-opacity="0.25"/>
<rect x="328" y="590.7" width="1" height="24.3" fill="#0000ff" fill-opacity="0.95"/>
<rect x="330" y="590.7" width="1" height="24.3" fill="#0000ff" fill-opacity="0.95"/>
<rect x="332.00" y="590.7" width="2.00" height="24.3" fill="#0000ff" fill-opacity="0.82"/>
<rect x="337.00" y="590.7" width="1.20" height="24.3" fill="#0000ff" fill-opacity="0.82"/>
<rect x="344.00" y="590.7" width="1.20" height="24.3" fill="#0000ff" fill-opacity="0.82"/>
<rect x="348.00" y="590.7" width="4.00" height="24.3" fill="#0000ff" fill-opacity="0.25"/>
<rect x="348" y="590.7" width="1" height="24.3" fill="#0000ff" fill-opacity="0.95"/>
<rect x="350" y="590.7" width="1" height="24.3" fill="#0000ff" fill-opacity="0.6"/>
<rect x="353.00" y="590.7" width="2.00" height="24.3" fill="#0000ff" fill-opacity="0.82"/>
<rect x="357.00" y="590.7" width="5.00" height="24.3" fill="#0000ff" fill-opacity="0.25"/>
<rect x="357" y="590.7" width="1" height="24.3" fill="#0000ff" fill-opacity="0.95"/>
<rect x="358" y="590.7" width="1" height="24.3" fill="#0000ff" fill-opacity="0.6"/>
<rect x="360" y="590.7" width="1" height="24.3" fill="#0000ff" fill-opacity="0.95"/>
<rect x="361" y="590.7" width="1" height="24.3" fill="#0000ff" fill-opacity="0.95"/>
<rect x="364.60" y="590.7" width="1.40" height="24.3" fill="#0000ff" fill-opacity="0.82"/>
<rect x="368.00" y="590.7" width="9.00" height="24.3" fill="#0000ff" fill-opacity="0.25"/>
<rect x="368" y="590.7" width="1" height="24.3" fill="#0000ff" fill-opacity="0.95"/>
<rect x="370" y="590.7" width="1" height="24.3" fill="#0000ff" fill-opacity="0.95"/>
<rect x="371" y="590.7" width="1" height="24.3" fill="#0000ff" fill-opacity="0.6"/>
<rect x="372" y="590.7" width="1" height="24.3" fill="#0000ff" fill-opacity="0.95"/>
<rect x="375" y="590.7" width="1" height="24.3" fill="#0000ff" fill-opacity="0.6"/>
<rect x="376" y="590.7" width="1" height="24.3" fill="#0000ff" fill-opacity="0.6"/>
<rect x="381.00" y="590.7" width="9.00" height="24.3" fill="#0000ff" fill-opacity="0.25"/>
<rect x="381" y="590.7" width="1" height="24.3" fill="#0000ff" fill-opacity="0.95"/>
<rect x="382" y="590.7" width="1" height="24.3" fill="#0000ff" fill-opacity="0.95"/>
<rect x="383" y="590.7" width="1" height="24.3" fill="#0000ff" fill-opacity="0.95"/>
<rect x="384" y="590.7" width="1" height="24.3" fill="#0000ff" fill-opacity="0.6"/>
<rect x="385" y="590.7" width="1" height="24.3" fill="#0000ff" fill-opacity="0.95"/>
<rect x="387" y="590.7" width="1" height="24.3" fill="#0000ff" fill-opacity="0.95"/>
<rect x="388" y="590.7" width="1" height="24.3" fill="#0000ff" fill-opacity="0.95"/>
<rect x="389" y="590.7" width="1" height="24.3" fill="#0000ff" fill-opacity="0.6"/>
<rect x="390.00" y="590.7" width="3.00" height="24.3" fill="#0000ff" fill-opacity="0.25"/>
<rect x="391" y="590.7" width="1" height="24.3" fill="#0000ff" fill-opacity="0.6"/>
<rect x="394.00" y="590.7" width="16.00" height="24.3" fill="#0000ff" fill-opacity="0.25"/>
<rect x="394" y="590.7" width="1" height="24.3" fill="#0000ff" fill-opacity="0.6"/>
<rect x="395" y="590.7" width="1" height="24.3" fill="#0000ff" fill-opacity="0.6"/>
<rect x="396" y="590.7" width="1" height="24.3" fill="#0000ff" fill-opacity="0.6"/>
<rect x="397" y="590.7" width="1" height="24.3" fill="#0000ff" fill-opacity="0.95"/>
<rect x="398" y="590.7" width="1" height="24.3" fill="#0000ff" fill-opacity="0.6"/>
<rect x="399" y="590.7" width="1" height="24.3" fill="#0000ff" fill-opacity="0.6"/>
<rect x="400" y="590.7" width="1" height="24.3" fill="#0000ff" fill-opacity="0.95"/>
<rect x="401" y="590.7" width="1" height="24.3" fill="#0000ff" fill-opacity="0.95"/>
<rect x="402" y="590.7" width="1" height="24.3" fill="#0000ff" fill-opacity="0.95"/>
<rect x="404" y="590.7" width="1" height="24.3" fill="#0000ff" fill-opacity="0.6"/>
<rect x="405" y="590.7" width="1" height="24.3" fill="#0000ff" fill-opacity="0.95"/>
<rect x="406" y="590.7" width="1" height="24.3" fill="#0000ff" fill-opacity="0.95"/>
<rect x="407" y="590.7" width="1" height="24.3" fill="#0000ff" fill-opacity="0.95"/>
<rect x="408" y="590.7" width="1" height="24.3" fill="#0000ff" fill-opacity="0.95"/>
<rect x="413.00" y="590.7" width="8.00" height="24.3" fill="#0000ff" fill-opacity="0.25"/>
<rect x="414" y="590.7" width="1" height="24.3" fill="#0000ff" fill-opacity="0.95"/>
<rect x="417" y="590.7" width="1" height="24.3" fill="#0000ff" fill-opacity="0.95"/>
<rect x="419" y="590.7" width="1" height="24.3" fill="#0000ff" fill-opacity="0.6"/>
<rect x="420" y="590.7" width="1" height="24.3" fill="#0000ff" fill-opacity="0.95"/>
<rect x="260.00" y="567.6" width="5.00" height="24.2" fill="#0000ff" fill-opacity="0.25"/>
<rect x="261" y="567.6" width="1" height="24.2" fill="#0000ff" fill-opacity="0.6"/>
<rect x="262" y="567.6" width="1" height="24.2" fill="#0000ff" fill-opacity="0.95"/>
<rect x="263" y="567.6" width="1" height="24.2" fill="#0000ff" fill-opacity="0.6"/>
<rect x="264" y="567.6" width="1" height="24.2" fill="#0000ff" fill-opacity="0.6"/>
<rect x="302.00" y="567.6" width="1.50" height="24.2" fill="#0000ff" fill-opacity="0.82"/>
<rect x="382.00" y="567.6" width="5.50" height="24.2" fill="#0000ff" fill-opacity="0.25"/>
<rect x="382" y="567.6" width="1" height="24.2" fill="#0000ff" fill-opacity="0.95"/>
<rect x="383" y="567.6" width="1" height="24.2" fill="#0000ff" fill-opacity="0.95"/>
<rect x="384" y="567.6" width="1" height="24.2" fill="#0000ff" fill-opacity="0.95"/>
<rect x="385" y="567.6" width="1" height="24.2" fill="#0000ff" fill-opacity="0.95"/>
<rect x="387" y="567.6" width="1" height="24.2" fill="#0000ff" fill-opacity="0.6"/>
<rect x="395.00" y="567.6" width="2.00" height="24.2" fill="#0000ff" fill-opacity="0.82"/>
<rect x="419.00" y="567.6" width="2.00" height="24.2" fill="#0000ff" fill-opacity="0.82"/>
<rect x="327.50" y="613.8" width="1.50" height="23.9" fill="#0000ff" fill-opacity="0.82"/>
<rect x="339.60" y="613.8" width="2.40" height="23.9" fill="#0000ff" fill-opacity="0.82"/>
<rect x="421.00" y="590.7" width="3.00" height="24.3" fill="#0000ff" fill-opacity="0.25"/>
<rect x="421" y="590.7" width="1" height="24.3" fill="#0000ff" fill-opacity="0.95"/>
<rect x="422" y="590.7" width="1" height="24.3" fill="#0000ff" fill-opacity="0.95"/>
<rect x="423" y="590.7" width="1" height="24.3" fill="#0000ff" fill-opacity="0.6"/>
<rect x="422.60" y="590.7" width="1.40" height="24.3" fill="#0000ff" fill-opacity="0.82"/>
<rect x="427.00" y="590.7" width="1.70" height="24.3" fill="#0000ff" fill-opacity="0.82"/>
<rect x="430.30" y="590.7" width="5.70" height="24.3" fill="#0000ff" fill-opacity="0.25"/>
<rect x="430" y="590.7" width="1" height="24.3" fill="#0000ff" fill-opacity="0.6"/>
<rect x="432" y="590.7" width="1" height="24.3" fill="#0000ff" fill-opacity="0.95"/>
<rect x="433" y="590.7" width="1" height="24.3" fill="#0000ff" fill-opacity="0.6"/>
<rect x="434" y="590.7" width="1" height="24.3" fill="#0000ff" fill-opacity="0.95"/>
<rect x="435" y="590.7" width="1" height="24.3" fill="#0000ff" fill-opacity="0.95"/>
<rect x="440.00" y="590.7" width="1.50" height="24.3" fill="#0000ff" fill-opacity="0.82"/>
<rect x="446.00" y="590.7" width="1.60" height="24.3" fill="#0000ff" fill-opacity="0.82"/>
<rect x="449.60" y="590.7" width="1.40" height="24.3" fill="#0000ff" fill-opacity="0.82"/>
<rect x="453.70" y="590.7" width="6.30" height="24.3" fill="#0000ff" fill-opacity="0.25"/>
<rect x="454" y="590.7" width="1" height="24.3" fill="#0000ff" fill-opacity="0.95"/>
<rect x="456" y="590.7" width="1" height="24.3" fill="#0000ff" fill-opacity="0.95"/>
<rect x="457" y="590.7" width="1" height="24.3" fill="#0000ff" fill-opacity="0.95"/>
<rect x="458" y="590.7" width="1" height="24.3" fill="#0000ff" fill-opacity="0.95"/>
<rect x="459" y="590.7" width="1" height="24.3" fill="#0000ff" fill-opacity="0.6"/>
<rect x="462.00" y="590.7" width="5.00" height="24.3" fill="#0000ff" fill-opacity="0.25"/>
<rect x="464" y="590.7" width="1" height="24.3" fill="#0000ff" fill-opacity="0.6"/>
<rect x="465" y="590.7" width="1" height="24.3" fill="#0000ff" fill-opacity="0.6"/>
<rect x="469.50" y="590.7" width="2.00" height="24.3" fill="#0000ff" fill-opacity="0.82"/>
<rect x="475.00" y="590.7" width="13.30" height="24.3" fill="#0000ff" fill-opacity="0.25"/>
<rect x="475" y="590.7" width="1" height="24.3" fill="#0000ff" fill-opacity="0.95"/>
<rect x="476" y="590.7" width="1" height="24.3" fill="#0000ff" fill-opacity="0.95"/>
<rect x="477" y="590.7" width="1" height="24.3" fill="#0000ff" fill-opacity="0.6"/>
<rect x="478" y="590.7" width="1" height="24.3" fill="#0000ff" fill-opacity="0.95"/>
<rect x="479" y="590.7" width="1" height="24.3" fill="#0000ff" fill-opacity="0.6"/>
<rect x="480" y="590.7" width="1" height="24.3" fill="#0000ff" fill-opacity="0.6"/>
<rect x="481" y="590.7" width="1" height="24.3" fill="#0000ff" fill-opacity="0.95"/>
<rect x="483" y="590.7" width="1" height="24.3" fill="#0000ff" fill-opacity="0.95"/>
<rect x="484" y="590.7" width="1" height="24.3" fill="#0000ff" fill-opacity="0.95"/>
<rect x="485" y="590.7" width="1" height="24.3" fill="#0000ff" fill-opacity="0.95"/>
<rect x="490.40" y="590.7" width="7.10" height="24.3" fill="#0000ff" fill-opacity="0.25"/>
<rect x="490" y="590.7" width="1" height="24.3" fill="#0000ff" fill-opacity="0.95"/>
<rect x="492" y="590.7" width="1" height="24.3" fill="#0000ff" fill-opacity="0.6"/>
<rect x="493" y="590.7" width="1" height="24.3" fill="#0000ff" fill-opacity="0.95"/>
<rect x="494" y="590.7" width="1" height="24.3" fill="#0000ff" fill-opacity="0.95"/>
<rect x="495" y="590.7" width="1" height="24.3" fill="#0000ff" fill-opacity="0.95"/>
<rect x="496" y="590.7" width="1" height="24.3" fill="#0000ff" fill-opacity="0.95"/>
<rect x="504.00" y="590.7" width="5.70" height="24.3" fill="#0000ff" fill-opacity="0.25"/>
<rect x="504" y="590.7" width="1" height="24.3" fill="#0000ff" fill-opacity="0.95"/>
<rect x="505" y="590.7" width="1" height="24.3" fill="#0000ff" fill-opacity="0.95"/>
<rect x="506" y="590.7" width="1" height="24.3" fill="#0000ff" fill-opacity="0.95"/>
<rect x="507" y="590.7" width="1" height="24.3" fill="#0000ff" fill-opacity="0.95"/>
<rect x="508" y="590.7" width="1" height="24.3" fill="#0000ff" fill-opacity="0.6"/>
<rect x="509" y="590.7" width="1" height="24.3" fill="#0000ff" fill-opacity="0.95"/>
<rect x="513.80" y="590.7" width="2.00" height="24.3" fill="#0000ff" fill-opacity="0.82"/>
<rect x="517.30" y="590.7" width="1.70" height="24.3" fill="#0000ff" fill-opacity="0.82"/>
<rect x="523.00" y="590.7" width="2.00" height="24.3" fill="#0000ff" fill-opacity="0.82"/>
<rect x="420.00" y="567.6" width="1.60" height="24.2" fill="#0000ff" fill-opacity="0.82"/>
<rect x="424.70" y="567.6" width="2.00" height="24.2" fill="#0000ff" fill-opacity="0.82"/>
<rect x="431.80" y="567.6" width="2.00" height="24.2" fill="#0000ff" fill-opacity="0.82"/>
<rect x="436.40" y="567.6" width="3.00" height="24.2" fill="#0000ff" fill-opacity="0.25"/>
<rect x="437" y="567.6" width="1" height="24.2" fill="#0000ff" fill-opacity="0.6"/>
<rect x="438" y="567.6" width="1" height="24.2" fill="#0000ff" fill-opacity="0.6"/>
<rect x="439" y="567.6" width="1" height="24.2" fill="#0000ff" fill-opacity="0.95"/>
<rect x="448.00" y="567.6" width="2.00" height="24.2" fill="#0000ff" fill-opacity="0.82"/>
<rect x="452.70" y="567.6" width="1.50" height="24.2" fill="#0000ff" fill-opacity="0.82"/>
<rect x="456.20" y="567.6" width="2.60" height="24.2" fill="#0000ff" fill-opacity="0.25"/>
<rect x="456" y="567.6" width="1" height="24.2" fill="#0000ff" fill-opacity="0.6"/>
<rect x="457" y="567.6" width="1" height="24.2" fill="#0000ff" fill-opacity="0.95"/>
<rect x="458" y="567.6" width="1" height="24.2" fill="#0000ff" fill-opacity="0.95"/>
<rect x="460.30" y="567.6" width="2.10" height="24.2" fill="#0000ff" fill-opacity="0.82"/>
<rect x="486.30" y="567.6" width="2.00" height="24.2" fill="#0000ff" fill-opacity="0.82"/>
<rect x="510.20" y="567.6" width="1.50" height="24.2" fill="#0000ff" fill-opacity="0.82"/>
<rect x="467.00" y="544.6" width="2.00" height="47.3" fill="#0000ff" fill-opacity="0.82"/>
<rect x="533.60" y="613.8" width="1.40" height="23.9" fill="#0000ff" fill-opacity="0.82"/>
<rect x="536.70" y="613.8" width="4.10" height="23.9" fill="#0000ff" fill-opacity="0.25"/>
<rect x="537" y="613.8" width="1" height="23.9" fill="#0000ff" fill-opacity="0.6"/>
<rect x="538" y="613.8" width="1" height="23.9" fill="#0000ff" fill-opacity="0.95"/>
<rect x="539" y="613.8" width="1" height="23.9" fill="#0000ff" fill-opacity="0.6"/>
<rect x="540" y="613.8" width="1" height="23.9" fill="#0000ff" fill-opacity="0.6"/>
<rect x="609.00" y="613.8" width="1.50" height="23.9" fill="#0000ff" fill-opacity="0.82"/>
<rect x="169.00" y="636.40" width="45.00" height="1.2" fill="#0000ff" fill-opacity="0.75"/>
<rect x="214.00" y="613.75" width="2.00" height="1.2" fill="#0000ff" fill-opacity="0.8"/>
<rect x="223.70" y="590.70" width="2.30" height="1.2" fill="#0000ff" fill-opacity="0.8"/>
<rect x="234.50" y="544.60" width="3.00" height="1.2" fill="#0000ff" fill-opacity="0.8"/>
<rect x="240.00" y="567.65" width="3.00" height="1.2" fill="#0000ff" fill-opacity="0.8"/>
<rect x="245.30" y="590.70" width="3.70" height="1.2" fill="#0000ff" fill-opacity="0.8"/>
<rect x="254.50" y="590.70" width="1.50" height="1.2" fill="#0000ff" fill-opacity="0.8"/>
<rect x="258.60" y="590.70" width="0.40" height="1.2" fill="#0000ff" fill-opacity="0.8"/>
<rect x="266.00" y="613.75" width="268.20" height="1.2" fill="#0000ff" fill-opacity="0.8"/>
<rect x="534.20" y="636.40" width="268.80" height="1.2" fill="#0000ff" fill-opacity="0.75"/>
<text x="165" y="640.7" text-anchor="end" font-family="Liberation Serif" font-size="12.6" fill="#4d4d4d" letter-spacing="0.8">0</text>
<text x="165" y="594.9" text-anchor="end" font-family="Liberation Serif" font-size="12.6" fill="#4d4d4d" letter-spacing="0.8">2</text>
<text x="165" y="549.1" text-anchor="end" font-family="Liberation Serif" font-size="12.6" fill="#4d4d4d" letter-spacing="0.8">4</text>
<text x="165" y="503.4" text-anchor="end" font-family="Liberation Serif" font-size="12.6" fill="#4d4d4d" letter-spacing="0.8">6</text>
<text x="165" y="457.6" text-anchor="end" font-family="Liberation Serif" font-size="12.6" fill="#4d4d4d" letter-spacing="0.8">8</text>
<text x="165" y="411.8" text-anchor="end" font-family="Liberation Serif" font-size="12.6" fill="#4d4d4d" letter-spacing="0.8">10</text>
<text x="169.8" y="653" text-anchor="middle" font-family="Liberation Serif" font-size="12.6" fill="#4d4d4d" textLength="36.5" lengthAdjust="spacing">30000</text>
<text x="258.9" y="653" text-anchor="middle" font-family="Liberation Serif" font-size="12.6" fill="#4d4d4d" textLength="36.5" lengthAdjust="spacing">35000</text>
<text x="348.0" y="653" text-anchor="middle" font-family="Liberation Serif" font-size="12.6" fill="#4d4d4d" textLength="36.5" lengthAdjust="spacing">40000</text>
<text x="437.1" y="653" text-anchor="middle" font-family="Liberation Serif" font-size="12.6" fill="#4d4d4d" textLength="36.5" lengthAdjust="spacing">45000</text>
<text x="526.2" y="653" text-anchor="middle" font-family="Liberation Serif" font-size="12.6" fill="#4d4d4d" textLength="36.5" lengthAdjust="spacing">50000</text>
<text x="615.3" y="653" text-anchor="middle" font-family="Liberation Serif" font-size="12.6" fill="#4d4d4d" textLength="36.5" lengthAdjust="spacing">55000</text>
<text x="704.4" y="653" text-anchor="middle" font-family="Liberation Serif" font-size="12.6" fill="#4d4d4d" textLength="36.5" lengthAdjust="spacing">60000</text>
<text x="793.5" y="653" text-anchor="middle" font-family="Liberation Serif" font-size="12.6" fill="#4d4d4d" textLength="36.5" lengthAdjust="spacing">65000</text>
<rect x="697.5" y="416.5" width="14" height="11" fill="#fff" stroke="#ccc" stroke-width="1"/>
<rect x="699" y="418" width="12" height="8" fill="#00f"/>
<text x="716.4" y="426" font-family="Liberation Serif" font-size="12" fill="#808080" textLength="76.8" lengthAdjust="spacing">aida02 1.8.H</text>
<path d="M802.5 395.9 L813.5 406.9 L802.5 417.9 L791.5 406.9 Z" fill="#ff0000"/>
<line x1="1210.5" y1="407" x2="1210.5" y2="637" stroke="#e6e6e6" stroke-width="1"/>
<line x1="1299.5" y1="407" x2="1299.5" y2="637" stroke="#e6e6e6" stroke-width="1"/>
<line x1="1388.5" y1="407" x2="1388.5" y2="637" stroke="#e6e6e6" stroke-width="1"/>
<line x1="1477.5" y1="407" x2="1477.5" y2="637" stroke="#e6e6e6" stroke-width="1"/>
<line x1="1566.5" y1="407" x2="1566.5" y2="637" stroke="#e6e6e6" stroke-width="1"/>
<line x1="1655.5" y1="407" x2="1655.5" y2="637" stroke="#e6e6e6" stroke-width="1"/>
<line x1="1744.5" y1="407" x2="1744.5" y2="637" stroke="#e6e6e6" stroke-width="1"/>
<line x1="1122" y1="591.5" x2="1754" y2="591.5" stroke="#efefef" stroke-width="1"/>
<line x1="1122" y1="545.5" x2="1754" y2="545.5" stroke="#efefef" stroke-width="1"/>
<line x1="1122" y1="499.5" x2="1754" y2="499.5" stroke="#efefef" stroke-width="1"/>
<line x1="1122" y1="453.5" x2="1754" y2="453.5" stroke="#efefef" stroke-width="1"/>
<rect x="1121" y="406" width="634" height="232" fill="none" stroke="#808080" stroke-width="2"/>
<rect x="1168.50" y="613.8" width="1.20" height="23.9" fill="#0000ff" fill-opacity="0.82"/>
<rect x="1169.00" y="567.6" width="1.20" height="47.3" fill="#0000ff" fill-opacity="0.82"/>
<rect x="1169.40" y="544.6" width="1.85" height="47.3" fill="#0000ff" fill-opacity="0.82"/>
<rect x="1171.90" y="590.7" width="1.85" height="46.9" fill="#0000ff" fill-opacity="0.82"/>
<rect x="1173.75" y="590.7" width="3.25" height="24.3" fill="#0000ff" fill-opacity="0.25"/>
<rect x="1174" y="590.7" width="1" height="24.3" fill="#0000ff" fill-opacity="0.6"/>
<rect x="1175" y="590.7" width="1" height="24.3" fill="#0000ff" fill-opacity="0.95"/>
<rect x="1176" y="590.7" width="1" height="24.3" fill="#0000ff" fill-opacity="0.95"/>
<rect x="1178.50" y="544.6" width="1.50" height="47.3" fill="#0000ff" fill-opacity="0.82"/>
<rect x="1180.00" y="521.5" width="2.50" height="47.3" fill="#0000ff" fill-opacity="0.82"/>
<rect x="1182.50" y="544.6" width="1.90" height="24.3" fill="#0000ff" fill-opacity="0.82"/>
<rect x="1183.00" y="567.6" width="4.00" height="24.2" fill="#0000ff" fill-opacity="0.25"/>
<rect x="1183" y="567.6" width="1" height="24.2" fill="#0000ff" fill-opacity="0.95"/>
<rect x="1184" y="567.6" width="1" height="24.2" fill="#0000ff" fill-opacity="0.95"/>
<rect x="1186" y="567.6" width="1" height="24.2" fill="#0000ff" fill-opacity="0.6"/>
<rect x="1188.00" y="544.6" width="2.00" height="47.3" fill="#0000ff" fill-opacity="0.82"/>
<rect x="1190.00" y="567.6" width="2.50" height="24.2" fill="#0000ff" fill-opacity="0.82"/>
<rect x="1192.00" y="544.6" width="2.00" height="47.3" fill="#0000ff" fill-opacity="0.82"/>
<rect x="1193.00" y="567.6" width="2.00" height="24.2" fill="#0000ff" fill-opacity="0.82"/>
<rect x="1194.40" y="590.7" width="9.35" height="24.3" fill="#0000ff" fill-opacity="0.25"/>
<rect x="1195" y="590.7" width="1" height="24.3" fill="#0000ff" fill-opacity="0.6"/>
<rect x="1196" y="590.7" width="1" height="24.3" fill="#0000ff" fill-opacity="0.95"/>
<rect x="1198" y="590.7" width="1" height="24.3" fill="#0000ff" fill-opacity="0.6"/>
<rect x="1199" y="590.7" width="1" height="24.3" fill="#0000ff" fill-opacity="0.6"/>
<rect x="1200" y="590.7" width="1" height="24.3" fill="#0000ff" fill-opacity="0.95"/>
<rect x="1201" y="590.7" width="1" height="24.3" fill="#0000ff" fill-opacity="0.95"/>
<rect x="1203" y="590.7" width="1" height="24.3" fill="#0000ff" fill-opacity="0.95"/>
<rect x="1206.00" y="590.7" width="4.60" height="24.3" fill="#0000ff" fill-opacity="0.25"/>
<rect x="1206" y="590.7" width="1" height="24.3" fill="#0000ff" fill-opacity="0.95"/>
<rect x="1207" y="590.7" width="1" height="24.3" fill="#0000ff" fill-opacity="0.95"/>
<rect x="1208" y="590.7" width="1" height="24.3" fill="#0000ff" fill-opacity="0.95"/>
<rect x="1209" y="590.7" width="1" height="24.3" fill="#0000ff" fill-opacity="0.95"/>
<rect x="1210" y="590.7" width="1" height="24.3" fill="#0000ff" fill-opacity="0.95"/>
<rect x="1215.00" y="590.7" width="1.20" height="24.3" fill="#0000ff" fill-opacity="0.82"/>
<rect x="1219.00" y="590.7" width="2.00" height="24.3" fill="#0000ff" fill-opacity="0.82"/>
<rect x="1217.00" y="613.8" width="1.20" height="23.9" fill="#0000ff" fill-opacity="0.82"/>
<rect x="1222.00" y="590.7" width="4.00" height="24.3" fill="#0000ff" fill-opacity="0.25"/>
<rect x="1223" y="590.7" width="1" height="24.3" fill="#0000ff" fill-opacity="0.95"/>
<rect x="1224" y="590.7" width="1" height="24.3" fill="#0000ff" fill-opacity="0.6"/>
<rect x="1225" y="590.7" width="1" height="24.3" fill="#0000ff" fill-opacity="0.95"/>
<rect x="1227.00" y="613.8" width="1.20" height="23.9" fill="#0000ff" fill-opacity="0.82"/>
<rect x="1232.00" y="590.7" width="3.00" height="24.3" fill="#0000ff" fill-opacity="0.25"/>
<rect x="1232" y="590.7" width="1" height="24.3" fill="#0000ff" fill-opacity="0.6"/>
<rect x="1233" y="590.7" width="1" height="24.3" fill="#0000ff" fill-opacity="0.95"/>
<rect x="1234" y="590.7" width="1" height="24.3" fill="#0000ff" fill-opacity="0.95"/>
<rect x="1237.00" y="590.7" width="4.70" height="24.3" fill="#0000ff" fill-opacity="0.25"/>
<rect x="1237" y="590.7" width="1" height="24.3" fill="#0000ff" fill-opacity="0.95"/>
<rect x="1238" y="590.7" width="1" height="24.3" fill="#0000ff" fill-opacity="0.95"/>
<rect x="1239" y="590.7" width="1" height="24.3" fill="#0000ff" fill-opacity="0.95"/>
<rect x="1241" y="590.7" width="1" height="24.3" fill="#0000ff" fill-opacity="0.95"/>
<rect x="1243.00" y="590.7" width="1.60" height="24.3" fill="#0000ff" fill-opacity="0.82"/>
<rect x="1246.25" y="590.7" width="2.95" height="24.3" fill="#0000ff" fill-opacity="0.25"/>
<rect x="1246" y="590.7" width="1" height="24.3" fill="#0000ff" fill-opacity="0.6"/>
<rect x="1247" y="590.7" width="1" height="24.3" fill="#0000ff" fill-opacity="0.95"/>
<rect x="1260.80" y="590.7" width="1.20" height="24.3" fill="#0000ff" fill-opacity="0.82"/>
<rect x="1263.00" y="590.7" width="1.60" height="24.3" fill="#0000ff" fill-opacity="0.82"/>
<rect x="1271.25" y="590.7" width="1.25" height="24.3" fill="#0000ff" fill-opacity="0.82"/>
<rect x="1286.70" y="590.7" width="1.30" height="24.3" fill="#0000ff" fill-opacity="0.82"/>
<rect x="1306.70" y="590.7" width="1.30" height="24.3" fill="#0000ff" fill-opacity="0.82"/>
<rect x="1340.40" y="590.7" width="1.60" height="24.3" fill="#0000ff" fill-opacity="0.82"/>
<rect x="1347.00" y="590.7" width="1.30" height="24.3" fill="#0000ff" fill-opacity="0.82"/>
<rect x="1355.00" y="590.7" width="1.25" height="24.3" fill="#0000ff" fill-opacity="0.82"/>
<rect x="1359.00" y="590.7" width="1.80" height="24.3" fill="#0000ff" fill-opacity="0.82"/>
<rect x="1369.60" y="590.7" width="1.20" height="24.3" fill="#0000ff" fill-opacity="0.82"/>
<rect x="1377.50" y="590.7" width="3.30" height="24.3" fill="#0000ff" fill-opacity="0.25"/>
<rect x="1378" y="590.7" width="1" height="24.3" fill="#0000ff" fill-opacity="0.95"/>
<rect x="1379" y="590.7" width="1" height="24.3" fill="#0000ff" fill-opacity="0.6"/>
<rect x="1380" y="590.7" width="1" height="24.3" fill="#0000ff" fill-opacity="0.95"/>
<rect x="1381.70" y="590.7" width="1.60" height="24.3" fill="#0000ff" fill-opacity="0.82"/>
<rect x="1392.00" y="590.7" width="3.00" height="24.3" fill="#0000ff" fill-opacity="0.25"/>
<rect x="1392" y="590.7" width="1" height="24.3" fill="#0000ff" fill-opacity="0.95"/>
<rect x="1394" y="590.7" width="1" height="24.3" fill="#0000ff" fill-opacity="0.95"/>
<rect x="1393.75" y="567.6" width="1.65" height="24.2" fill="#0000ff" fill-opacity="0.82"/>
<rect x="1398.30" y="590.7" width="6.30" height="24.3" fill="#0000ff" fill-opacity="0.25"/>
<rect x="1398" y="590.7" width="1" height="24.3" fill="#0000ff" fill-opacity="0.95"/>
<rect x="1400" y="590.7" width="1" height="24.3" fill="#0000ff" fill-opacity="0.95"/>
<rect x="1401" y="590.7" width="1" height="24.3" fill="#0000ff" fill-opacity="0.6"/>
<rect x="1402" y="590.7" width="1" height="24.3" fill="#0000ff" fill-opacity="0.95"/>
<rect x="1403" y="590.7" width="1" height="24.3" fill="#0000ff" fill-opacity="0.95"/>
<rect x="1404" y="590.7" width="1" height="24.3" fill="#0000ff" fill-opacity="0.6"/>
<rect x="1252.00" y="613.8" width="1.75" height="23.9" fill="#0000ff" fill-opacity="0.82"/>
<rect x="1266.25" y="613.8" width="1.25" height="23.9" fill="#0000ff" fill-opacity="0.82"/>
<rect x="1281.25" y="613.8" width="6.25" height="23.9" fill="#0000ff" fill-opacity="0.25"/>
<rect x="1281" y="613.8" width="1" height="23.9" fill="#0000ff" fill-opacity="0.6"/>
<rect x="1283" y="613.8" width="1" height="23.9" fill="#0000ff" fill-opacity="0.95"/>
<rect x="1285" y="613.8" width="1" height="23.9" fill="#0000ff" fill-opacity="0.95"/>
<rect x="1286" y="613.8" width="1" height="23.9" fill="#0000ff" fill-opacity="0.6"/>
<rect x="1287" y="613.8" width="1" height="23.9" fill="#0000ff" fill-opacity="0.6"/>
<rect x="1291.25" y="613.8" width="1.75" height="23.9" fill="#0000ff" fill-opacity="0.82"/>
<rect x="1295.00" y="613.8" width="1.70" height="23.9" fill="#0000ff" fill-opacity="0.82"/>
<rect x="1298.75" y="613.8" width="5.00" height="23.9" fill="#0000ff" fill-opacity="0.25"/>
<rect x="1299" y="613.8" width="1" height="23.9" fill="#0000ff" fill-opacity="0.95"/>
<rect x="1300" y="613.8" width="1" height="23.9" fill="#0000ff" fill-opacity="0.95"/>
<rect x="1301" y="613.8" width="1" height="23.9" fill="#0000ff" fill-opacity="0.6"/>
<rect x="1302" y="613.8" width="1" height="23.9" fill="#0000ff" fill-opacity="0.95"/>
<rect x="1303" y="613.8" width="1" height="23.9" fill="#0000ff" fill-opacity="0.95"/>
<rect x="1306.25" y="613.8" width="1.25" height="23.9" fill="#0000ff" fill-opacity="0.82"/>
<rect x="1311.70" y="613.8" width="1.30" height="23.9" fill="#0000ff" fill-opacity="0.82"/>
<rect x="1323.00" y="613.8" width="1.20" height="23.9" fill="#0000ff" fill-opacity="0.82"/>
<rect x="1330.00" y="613.8" width="1.70" height="23.9" fill="#0000ff" fill-opacity="0.82"/>
<rect x="1341.70" y="613.8" width="1.30" height="23.9" fill="#0000ff" fill-opacity="0.82"/>
<rect x="1353.30" y="613.8" width="1.30" height="23.9" fill="#0000ff" fill-opacity="0.82"/>
<rect x="1358.00" y="613.8" width="1.60" height="23.9" fill="#0000ff" fill-opacity="0.82"/>
<rect x="1362.00" y="613.8" width="1.75" height="23.9" fill="#0000ff" fill-opacity="0.82"/>
<rect x="1375.80" y="613.8" width="1.70" height="23.9" fill="#0000ff" fill-opacity="0.82"/>
<rect x="1407.00" y="590.7" width="9.25" height="24.3" fill="#0000ff" fill-opacity="0.25"/>
<rect x="1407" y="590.7" width="1" height="24.3" fill="#0000ff" fill-opacity="0.95"/>
<rect x="1408" y="590.7" width="1" height="24.3" fill="#0000ff" fill-opacity="0.95"/>
<rect x="1409" y="590.7" width="1" height="24.3" fill="#0000ff" fill-opacity="0.95"/>
<rect x="1410" y="590.7" width="1" height="24.3" fill="#0000ff" fill-opacity="0.95"/>
<rect x="1411" y="590.7" width="1" height="24.3" fill="#0000ff" fill-opacity="0.95"/>
<rect x="1412" y="590.7" width="1" height="24.3" fill="#0000ff" fill-opacity="0.95"/>
<rect x="1413" y="590.7" width="1" height="24.3" fill="#0000ff" fill-opacity="0.95"/>
<rect x="1414" y="590.7" width="1" height="24.3" fill="#0000ff" fill-opacity="0.6"/>
<rect x="1415" y="590.7" width="1" height="24.3" fill="#0000ff" fill-opacity="0.95"/>
<rect x="1420.40" y="590.7" width="4.20" height="24.3" fill="#0000ff" fill-opacity="0.25"/>
<rect x="1420" y="590.7" width="1" height="24.3" fill="#0000ff" fill-opacity="0.95"/>
<rect x="1421" y="590.7" width="1" height="24.3" fill="#0000ff" fill-opacity="0.95"/>
<rect x="1422" y="590.7" width="1" height="24.3" fill="#0000ff" fill-opacity="0.6"/>
<rect x="1423" y="590.7" width="1" height="24.3" fill="#0000ff" fill-opacity="0.6"/>
<rect x="1434.00" y="590.7" width="7.70" height="24.3" fill="#0000ff" fill-opacity="0.25"/>
<rect x="1434" y="590.7" width="1" height="24.3" fill="#0000ff" fill-opacity="0.6"/>
<rect x="1436" y="590.7" width="1" height="24.3" fill="#0000ff" fill-opacity="0.95"/>
<rect x="1437" y="590.7" width="1" height="24.3" fill="#0000ff" fill-opacity="0.6"/>
<rect x="1438" y="590.7" width="1" height="24.3" fill="#0000ff" fill-opacity="0.6"/>
<rect x="1440" y="590.7" width="1" height="24.3" fill="#0000ff" fill-opacity="0.95"/>
<rect x="1441" y="590.7" width="1" height="24.3" fill="#0000ff" fill-opacity="0.6"/>
<rect x="1446.25" y="590.7" width="6.75" height="24.3" fill="#0000ff" fill-opacity="0.25"/>
<rect x="1446" y="590.7" width="1" height="24.3" fill="#0000ff" fill-opacity="0.6"/>
<rect x="1447" y="590.7" width="1" height="24.3" fill="#0000ff" fill-opacity="0.6"/>
<rect x="1448" y="590.7" width="1" height="24.3" fill="#0000ff" fill-opacity="0.6"/>
<rect x="1449" y="590.7" width="1" height="24.3" fill="#0000ff" fill-opacity="0.95"/>
<rect x="1450" y="590.7" width="1" height="24.3" fill="#0000ff" fill-opacity="0.6"/>
<rect x="1451" y="590.7" width="1" height="24.3" fill="#0000ff" fill-opacity="0.95"/>
<rect x="1452" y="590.7" width="1" height="24.3" fill="#0000ff" fill-opacity="0.95"/>
<rect x="1464.60" y="590.7" width="1.65" height="24.3" fill="#0000ff" fill-opacity="0.82"/>
<rect x="1485.00" y="590.7" width="2.00" height="24.3" fill="#0000ff" fill-opacity="0.82"/>
<rect x="1457.00" y="613.8" width="2.00" height="23.9" fill="#0000ff" fill-opacity="0.82"/>
<rect x="1461.25" y="613.8" width="2.05" height="23.9" fill="#0000ff" fill-opacity="0.82"/>
<rect x="1468.00" y="613.8" width="2.00" height="23.9" fill="#0000ff" fill-opacity="0.82"/>
<rect x="1471.70" y="613.8" width="2.90" height="23.9" fill="#0000ff" fill-opacity="0.25"/>
<rect x="1472" y="613.8" width="1" height="23.9" fill="#0000ff" fill-opacity="0.95"/>
<rect x="1473" y="613.8" width="1" height="23.9" fill="#0000ff" fill-opacity="0.95"/>
<rect x="1474" y="613.8" width="1" height="23.9" fill="#0000ff" fill-opacity="0.6"/>
<rect x="1481.70" y="613.8" width="6.60" height="23.9" fill="#0000ff" fill-opacity="0.25"/>
<rect x="1483" y="613.8" width="1" height="23.9" fill="#0000ff" fill-opacity="0.95"/>
<rect x="1485" y="613.8" width="1" height="23.9" fill="#0000ff" fill-opacity="0.6"/>
<rect x="1486" y="613.8" width="1" height="23.9" fill="#0000ff" fill-opacity="0.95"/>
<rect x="1487" y="613.8" width="1" height="23.9" fill="#0000ff" fill-opacity="0.95"/>
<rect x="1490.80" y="613.8" width="4.60" height="23.9" fill="#0000ff" fill-opacity="0.25"/>
<rect x="1491" y="613.8" width="1" height="23.9" fill="#0000ff" fill-opacity="0.95"/>
<rect x="1492" y="613.8" width="1" height="23.9" fill="#0000ff" fill-opacity="0.95"/>
<rect x="1494" y="613.8" width="1" height="23.9" fill="#0000ff" fill-opacity="0.6"/>
<rect x="1495" y="613.8" width="1" height="23.9" fill="#0000ff" fill-opacity="0.95"/>
<rect x="1121.00" y="636.40" width="47.50" height="1.2" fill="#0000ff" fill-opacity="0.75"/>
<rect x="1173.75" y="613.75" width="5.00" height="1.2" fill="#0000ff" fill-opacity="0.8"/>
<rect x="1177.00" y="590.70" width="1.75" height="1.2" fill="#0000ff" fill-opacity="0.8"/>
<rect x="1194.00" y="613.75" width="301.40" height="1.2" fill="#0000ff" fill-opacity="0.8"/>
<rect x="1495.40" y="636.40" width="259.60" height="1.2" fill="#0000ff" fill-opacity="0.75"/>
<text x="1117" y="640.7" text-anchor="end" font-family="Liberation Serif" font-size="12.6" fill="#4d4d4d" letter-spacing="0.8">0</text>
<text x="1117" y="594.9" text-anchor="end" font-family="Liberation Serif" font-size="12.6" fill="#4d4d4d" letter-spacing="0.8">2</text>
<text x="1117" y="549.1" text-anchor="end" font-family="Liberation Serif" font-size="12.6" fill="#4d4d4d" letter-spacing="0.8">4</text>
<text x="1117" y="503.4" text-anchor="end" font-family="Liberation Serif" font-size="12.6" fill="#4d4d4d" letter-spacing="0.8">6</text>
<text x="1117" y="457.6" text-anchor="end" font-family="Liberation Serif" font-size="12.6" fill="#4d4d4d" letter-spacing="0.8">8</text>
<text x="1117" y="411.8" text-anchor="end" font-family="Liberation Serif" font-size="12.6" fill="#4d4d4d" letter-spacing="0.8">10</text>
<text x="1121.8" y="653" text-anchor="middle" font-family="Liberation Serif" font-size="12.6" fill="#4d4d4d" textLength="36.5" lengthAdjust="spacing">30000</text>
<text x="1210.9" y="653" text-anchor="middle" font-family="Liberation Serif" font-size="12.6" fill="#4d4d4d" textLength="36.5" lengthAdjust="spacing">35000</text>
<text x="1300.0" y="653" text-anchor="middle" font-family="Liberation Serif" font-size="12.6" fill="#4d4d4d" textLength="36.5" lengthAdjust="spacing">40000</text>
<text x="1389.1" y="653" text-anchor="middle" font-family="Liberation Serif" font-size="12.6" fill="#4d4d4d" textLength="36.5" lengthAdjust="spacing">45000</text>
<text x="1478.2" y="653" text-anchor="middle" font-family="Liberation Serif" font-size="12.6" fill="#4d4d4d" textLength="36.5" lengthAdjust="spacing">50000</text>
<text x="1567.3" y="653" text-anchor="middle" font-family="Liberation Serif" font-size="12.6" fill="#4d4d4d" textLength="36.5" lengthAdjust="spacing">55000</text>
<text x="1656.4" y="653" text-anchor="middle" font-family="Liberation Serif" font-size="12.6" fill="#4d4d4d" textLength="36.5" lengthAdjust="spacing">60000</text>
<text x="1745.5" y="653" text-anchor="middle" font-family="Liberation Serif" font-size="12.6" fill="#4d4d4d" textLength="36.5" lengthAdjust="spacing">65000</text>
<rect x="1649.5" y="416.5" width="14" height="11" fill="#fff" stroke="#ccc" stroke-width="1"/>
<rect x="1651" y="418" width="12" height="8" fill="#00f"/>
<text x="1668.4" y="426" font-family="Liberation Serif" font-size="12" fill="#808080" textLength="76.8" lengthAdjust="spacing">aida04 1.8.H</text>
<path d="M1754.5 395.9 L1765.5 406.9 L1754.5 417.9 L1743.5 406.9 Z" fill="#ff0000"/>
<line x1="258.5" y1="678" x2="258.5" y2="908" stroke="#e6e6e6" stroke-width="1"/>
<line x1="347.5" y1="678" x2="347.5" y2="908" stroke="#e6e6e6" stroke-width="1"/>
<line x1="436.5" y1="678" x2="436.5" y2="908" stroke="#e6e6e6" stroke-width="1"/>
<line x1="525.5" y1="678" x2="525.5" y2="908" stroke="#e6e6e6" stroke-width="1"/>
<line x1="614.5" y1="678" x2="614.5" y2="908" stroke="#e6e6e6" stroke-width="1"/>
<line x1="703.5" y1="678" x2="703.5" y2="908" stroke="#e6e6e6" stroke-width="1"/>
<line x1="792.5" y1="678" x2="792.5" y2="908" stroke="#e6e6e6" stroke-width="1"/>
<line x1="170" y1="862.5" x2="802" y2="862.5" stroke="#efefef" stroke-width="1"/>
<line x1="170" y1="816.5" x2="802" y2="816.5" stroke="#efefef" stroke-width="1"/>
<line x1="170" y1="770.5" x2="802" y2="770.5" stroke="#efefef" stroke-width="1"/>
<line x1="170" y1="724.5" x2="802" y2="724.5" stroke="#efefef" stroke-width="1"/>
<rect x="169" y="677" width="634" height="232" fill="none" stroke="#808080" stroke-width="2"/>
<rect x="217.00" y="884.8" width="1.30" height="23.9" fill="#0000ff" fill-opacity="0.82"/>
<rect x="218.30" y="861.7" width="2.00" height="24.3" fill="#0000ff" fill-opacity="0.82"/>
<rect x="223.30" y="884.8" width="2.50" height="23.9" fill="#0000ff" fill-opacity="0.82"/>
<rect x="227.50" y="815.6" width="1.70" height="70.4" fill="#0000ff" fill-opacity="0.82"/>
<rect x="228.80" y="746.4" width="2.00" height="116.5" fill="#0000ff" fill-opacity="0.82"/>
<rect x="227.50" y="815.6" width="10.80" height="24.3" fill="#0000ff" fill-opacity="0.25"/>
<rect x="228" y="815.6" width="1" height="24.3" fill="#0000ff" fill-opacity="0.95"/>
<rect x="229" y="815.6" width="1" height="24.3" fill="#0000ff" fill-opacity="0.6"/>
<rect x="230" y="815.6" width="1" height="24.3" fill="#0000ff" fill-opacity="0.95"/>
<rect x="231" y="815.6" width="1" height="24.3" fill="#0000ff" fill-opacity="0.95"/>
<rect x="233" y="815.6" width="1" height="24.3" fill="#0000ff" fill-opacity="0.95"/>
<rect x="234" y="815.6" width="1" height="24.3" fill="#0000ff" fill-opacity="0.6"/>
<rect x="235" y="815.6" width="1" height="24.3" fill="#0000ff" fill-opacity="0.95"/>
<rect x="236" y="815.6" width="1" height="24.3" fill="#0000ff" fill-opacity="0.95"/>
<rect x="231.70" y="792.5" width="3.30" height="47.3" fill="#0000ff" fill-opacity="0.25"/>
<rect x="232" y="792.5" width="1" height="47.3" fill="#0000ff" fill-opacity="0.95"/>
<rect x="233" y="792.5" width="1" height="47.3" fill="#0000ff" fill-opacity="0.95"/>
<rect x="234" y="792.5" width="1" height="47.3" fill="#0000ff" fill-opacity="0.95"/>
<rect x="231.30" y="838.6" width="1.20" height="24.2" fill="#0000ff" fill-opacity="0.82"/>
<rect x="236.70" y="838.6" width="4.10" height="24.2" fill="#0000ff" fill-opacity="0.25"/>
<rect x="237" y="838.6" width="1" height="24.2" fill="#0000ff" fill-opacity="0.95"/>
<rect x="238" y="838.6" width="1" height="24.2" fill="#0000ff" fill-opacity="0.6"/>
<rect x="239" y="838.6" width="1" height="24.2" fill="#0000ff" fill-opacity="0.6"/>
<rect x="239.00" y="815.6" width="1.80" height="47.3" fill="#0000ff" fill-opacity="0.82"/>
<rect x="241.70" y="861.7" width="5.00" height="24.3" fill="#0000ff" fill-opacity="0.25"/>
<rect x="243" y="861.7" width="1" height="24.3" fill="#0000ff" fill-opacity="0.6"/>
<rect x="244" y="861.7" width="1" height="24.3" fill="#0000ff" fill-opacity="0.6"/>
<rect x="246" y="861.7" width="1" height="24.3" fill="#0000ff" fill-opacity="0.6"/>
<rect x="245.80" y="838.6" width="1.70" height="24.2" fill="#0000ff" fill-opacity="0.82"/>
<rect x="248.30" y="861.7" width="1.70" height="24.3" fill="#0000ff" fill-opacity="0.82"/>
<rect x="251.70" y="838.6" width="1.60" height="24.2" fill="#0000ff" fill-opacity="0.82"/>
<rect x="254.00" y="861.7" width="16.00" height="24.3" fill="#0000ff" fill-opacity="0.25"/>
<rect x="254" y="861.7" width="1" height="24.3" fill="#0000ff" fill-opacity="0.6"/>
<rect x="255" y="861.7" width="1" height="24.3" fill="#0000ff" fill-opacity="0.95"/>
<rect x="256" y="861.7" width="1" height="24.3" fill="#0000ff" fill-opacity="0.6"/>
<rect x="257" y="861.7" width="1" height="24.3" fill="#0000ff" fill-opacity="0.95"/>
<rect x="258" y="861.7" width="1" height="24.3" fill="#0000ff" fill-opacity="0.6"/>
<rect x="259" y="861.7" width="1" height="24.3" fill="#0000ff" fill-opacity="0.95"/>
<rect x="261" y="861.7" width="1" height="24.3" fill="#0000ff" fill-opacity="0.6"/>
<rect x="262" y="861.7" width="1" height="24.3" fill="#0000ff" fill-opacity="0.6"/>
<rect x="263" y="861.7" width="1" height="24.3" fill="#0000ff" fill-opacity="0.95"/>
<rect x="264" y="861.7" width="1" height="24.3" fill="#0000ff" fill-opacity="0.95"/>
<rect x="265" y="861.7" width="1" height="24.3" fill="#0000ff" fill-opacity="0.6"/>
<rect x="266" y="861.7" width="1" height="24.3" fill="#0000ff" fill-opacity="0.95"/>
<rect x="267" y="861.7" width="1" height="24.3" fill="#0000ff" fill-opacity="0.95"/>
<rect x="268" y="861.7" width="1" height="24.3" fill="#0000ff" fill-opacity="0.95"/>
<rect x="269" y="861.7" width="1" height="24.3" fill="#0000ff" fill-opacity="0.6"/>
<rect x="274.00" y="884.8" width="1.80" height="23.9" fill="#0000ff" fill-opacity="0.82"/>
<rect x="275.50" y="861.7" width="1.50" height="24.3" fill="#0000ff" fill-opacity="0.82"/>
<rect x="280.50" y="861.7" width="1.50" height="24.3" fill="#0000ff" fill-opacity="0.82"/>
<rect x="288.50" y="861.7" width="1.80" height="24.3" fill="#0000ff" fill-opacity="0.82"/>
<rect x="296.00" y="861.7" width="1.75" height="24.3" fill="#0000ff" fill-opacity="0.82"/>
<rect x="300.00" y="861.7" width="3.50" height="24.3" fill="#0000ff" fill-opacity="0.25"/>
<rect x="301" y="861.7" width="1" height="24.3" fill="#0000ff" fill-opacity="0.6"/>
<rect x="302" y="861.7" width="1" height="24.3" fill="#0000ff" fill-opacity="0.95"/>
<rect x="303" y="861.7" width="1" height="24.3" fill="#0000ff" fill-opacity="0.95"/>
<rect x="307.40" y="861.7" width="2.20" height="24.3" fill="#0000ff" fill-opacity="0.82"/>
<rect x="311.80" y="861.7" width="2.70" height="24.3" fill="#0000ff" fill-opacity="0.25"/>
<rect x="312" y="861.7" width="1" height="24.3" fill="#0000ff" fill-opacity="0.95"/>
<rect x="313" y="861.7" width="1" height="24.3" fill="#0000ff" fill-opacity="0.6"/>
<rect x="314" y="861.7" width="1" height="24.3" fill="#0000ff" fill-opacity="0.95"/>
<rect x="315.80" y="861.7" width="3.50" height="24.3" fill="#0000ff" fill-opacity="0.25"/>
<rect x="316" y="861.7" width="1" height="24.3" fill="#0000ff" fill-opacity="0.95"/>
<rect x="317" y="861.7" width="1" height="24.3" fill="#0000ff" fill-opacity="0.6"/>
<rect x="318" y="861.7" width="1" height="24.3" fill="#0000ff" fill-opacity="0.95"/>
<rect x="324.10" y="861.7" width="1.90" height="24.3" fill="#0000ff" fill-opacity="0.82"/>
<rect x="327.20" y="861.7" width="1.80" height="24.3" fill="#0000ff" fill-opacity="0.82"/>
<rect x="333.80" y="861.7" width="1.80" height="24.3" fill="#0000ff" fill-opacity="0.82"/>
<rect x="339.50" y="861.7" width="2.20" height="24.3" fill="#0000ff" fill-opacity="0.82"/>
<rect x="343.00" y="861.7" width="1.80" height="24.3" fill="#0000ff" fill-opacity="0.82"/>
<rect x="347.00" y="861.7" width="9.20" height="24.3" fill="#0000ff" fill-opacity="0.25"/>
<rect x="347" y="861.7" width="1" height="24.3" fill="#0000ff" fill-opacity="0.6"/>
<rect x="348" y="861.7" width="1" height="24.3" fill="#0000ff" fill-opacity="0.6"/>
<rect x="350" y="861.7" width="1" height="24.3" fill="#0000ff" fill-opacity="0.6"/>
<rect x="351" y="861.7" width="1" height="24.3" fill="#0000ff" fill-opacity="0.95"/>
<rect x="353" y="861.7" width="1" height="24.3" fill="#0000ff" fill-opacity="0.95"/>
<rect x="354" y="861.7" width="1" height="24.3" fill="#0000ff" fill-opacity="0.95"/>
<rect x="359.30" y="861.7" width="4.90" height="24.3" fill="#0000ff" fill-opacity="0.25"/>
<rect x="359" y="861.7" width="1" height="24.3" fill="#0000ff" fill-opacity="0.6"/>
<rect x="360" y="861.7" width="1" height="24.3" fill="#0000ff" fill-opacity="0.6"/>
<rect x="361" y="861.7" width="1" height="24.3" fill="#0000ff" fill-opacity="0.95"/>
<rect x="362" y="861.7" width="1" height="24.3" fill="#0000ff" fill-opacity="0.95"/>
<rect x="366.80" y="861.7" width="7.00" height="24.3" fill="#0000ff" fill-opacity="0.25"/>
<rect x="367" y="861.7" width="1" height="24.3" fill="#0000ff" fill-opacity="0.6"/>
<rect x="368" y="861.7" width="1" height="24.3" fill="#0000ff" fill-opacity="0.6"/>
<rect x="369" y="861.7" width="1" height="24.3" fill="#0000ff" fill-opacity="0.95"/>
<rect x="370" y="861.7" width="1" height="24.3" fill="#0000ff" fill-opacity="0.6"/>
<rect x="371" y="861.7" width="1" height="24.3" fill="#0000ff" fill-opacity="0.95"/>
<rect x="373" y="861.7" width="1" height="24.3" fill="#0000ff" fill-opacity="0.95"/>
<rect x="377.30" y="861.7" width="2.20" height="24.3" fill="#0000ff" fill-opacity="0.82"/>
<rect x="383.50" y="861.7" width="1.80" height="24.3" fill="#0000ff" fill-opacity="0.82"/>
<rect x="395.00" y="861.7" width="1.70" height="24.3" fill="#0000ff" fill-opacity="0.82"/>
<rect x="399.00" y="861.7" width="6.00" height="24.3" fill="#0000ff" fill-opacity="0.25"/>
<rect x="399" y="861.7" width="1" height="24.3" fill="#0000ff" fill-opacity="0.95"/>
<rect x="400" y="861.7" width="1" height="24.3" fill="#0000ff" fill-opacity="0.95"/>
<rect x="401" y="861.7" width="1" height="24.3" fill="#0000ff" fill-opacity="0.95"/>
<rect x="402" y="861.7" width="1" height="24.3" fill="#0000ff" fill-opacity="0.95"/>
<rect x="403" y="861.7" width="1" height="24.3" fill="#0000ff" fill-opacity="0.6"/>
<rect x="404" y="861.7" width="1" height="24.3" fill="#0000ff" fill-opacity="0.6"/>
<rect x="409.50" y="861.7" width="2.20" height="24.3" fill="#0000ff" fill-opacity="0.82"/>
<rect x="419.60" y="861.7" width="1.70" height="24.3" fill="#0000ff" fill-opacity="0.82"/>
<rect x="423.50" y="861.7" width="2.20" height="24.3" fill="#0000ff" fill-opacity="0.82"/>
<rect x="439.40" y="861.7" width="1.60" height="24.3" fill="#0000ff" fill-opacity="0.82"/>
<rect x="329.90" y="838.6" width="1.70" height="24.2" fill="#0000ff" fill-opacity="0.82"/>
<rect x="366.80" y="838.6" width="1.80" height="24.2" fill="#0000ff" fill-opacity="0.82"/>
<rect x="291.00" y="884.8" width="2.00" height="23.9" fill="#0000ff" fill-opacity="0.82"/>
<rect x="299.50" y="884.8" width="1.80" height="23.9" fill="#0000ff" fill-opacity="0.82"/>
<rect x="337.80" y="884.8" width="1.20" height="23.9" fill="#0000ff" fill-opacity="0.82"/>
<rect x="389.20" y="884.8" width="1.30" height="23.9" fill="#0000ff" fill-opacity="0.82"/>
<rect x="395.80" y="884.8" width="1.30" height="23.9" fill="#0000ff" fill-opacity="0.82"/>
<rect x="408.00" y="884.8" width="1.50" height="23.9" fill="#0000ff" fill-opacity="0.82"/>
<rect x="431.40" y="884.8" width="1.40" height="23.9" fill="#0000ff" fill-opacity="0.82"/>
<rect x="434.50" y="884.8" width="3.50" height="23.9" fill="#0000ff" fill-opacity="0.25"/>
<rect x="434" y="884.8" width="1" height="23.9" fill="#0000ff" fill-opacity="0.95"/>
<rect x="435" y="884.8" width="1" height="23.9" fill="#0000ff" fill-opacity="0.95"/>
<rect x="436" y="884.8" width="1" height="23.9" fill="#0000ff" fill-opacity="0.95"/>
<rect x="444.00" y="884.8" width="56.70" height="23.9" fill="#0000ff" fill-opacity="0.25"/>
<rect x="445" y="884.8" width="1" height="23.9" fill="#0000ff" fill-opacity="0.6"/>
<rect x="446" y="884.8" width="1" height="23.9" fill="#0000ff" fill-opacity="0.6"/>
<rect x="447" y="884.8" width="1" height="23.9" fill="#0000ff" fill-opacity="0.95"/>
<rect x="448" y="884.8" width="1" height="23.9" fill="#0000ff" fill-opacity="0.95"/>
<rect x="449" y="884.8" width="1" height="23.9" fill="#0000ff" fill-opacity="0.95"/>
<rect x="450" y="884.8" width="1" height="23.9" fill="#0000ff" fill-opacity="0.95"/>
<rect x="451" y="884.8" width="1" height="23.9" fill="#0000ff" fill-opacity="0.6"/>
<rect x="452" y="884.8" width="1" height="23.9" fill="#0000ff" fill-opacity="0.95"/>
<rect x="453" y="884.8" width="1" height="23.9" fill="#0000ff" fill-opacity="0.6"/>
<rect x="454" y="884.8" width="1" height="23.9" fill="#0000ff" fill-opacity="0.95"/>
<rect x="455" y="884.8" width="1" height="23.9" fill="#0000ff" fill-opacity="0.95"/>
<rect x="457" y="884.8" width="1" height="23.9" fill="#0000ff" fill-opacity="0.6"/>
<rect x="458" y="884.8" width="1" height="23.9" fill="#0000ff" fill-opacity="0.6"/>
<rect x="459" y="884.8" width="1" height="23.9" fill="#0000ff" fill-opacity="0.95"/>
<rect x="460" y="884.8" width="1" height="23.9" fill="#0000ff" fill-opacity="0.95"/>
<rect x="461" y="884.8" width="1" height="23.9" fill="#0000ff" fill-opacity="0.95"/>
<rect x="463" y="884.8" width="1" height="23.9" fill="#0000ff" fill-opacity="0.95"/>
<rect x="464" y="884.8" width="1" height="23.9" fill="#0000ff" fill-opacity="0.95"/>
<rect x="465" y="884.8" width="1" height="23.9" fill="#0000ff" fill-opacity="0.6"/>
<rect x="466" y="884.8" width="1" height="23.9" fill="#0000ff" fill-opacity="0.95"/>
<rect x="467" y="884.8" width="1" height="23.9" fill="#0000ff" fill-opacity="0.95"/>
<rect x="468" y="884.8" width="1" height="23.9" fill="#0000ff" fill-opacity="0.95"/>
<rect x="469" y="884.8" width="1" height="23.9" fill="#0000ff" fill-opacity="0.95"/>
<rect x="470" y="884.8" width="1" height="23.9" fill="#0000ff" fill-opacity="0.95"/>
<rect x="471" y="884.8" width="1" height="23.9" fill="#0000ff" fill-opacity="0.95"/>
<rect x="472" y="884.8" width="1" height="23.9" fill="#0000ff" fill-opacity="0.95"/>
<rect x="473" y="884.8" width="1" height="23.9" fill="#0000ff" fill-opacity="0.6"/>
<rect x="474" y="884.8" width="1" height="23.9" fill="#0000ff" fill-opacity="0.6"/>
<rect x="475" y="884.8" width="1" height="23.9" fill="#0000ff" fill-opacity="0.95"/>
<rect x="476" y="884.8" width="1" height="23.9" fill="#0000ff" fill-opacity="0.95"/>
<rect x="477" y="884.8" width="1" height="23.9" fill="#0000ff" fill-opacity="0.95"/>
<rect x="478" y="884.8" width="1" height="23.9" fill="#0000ff" fill-opacity="0.95"/>
<rect x="479" y="884.8" width="1" height="23.9" fill="#0000ff" fill-opacity="0.95"/>
<rect x="480" y="884.8" width="1" height="23.9" fill="#0000ff" fill-opacity="0.95"/>
<rect x="482" y="884.8" width="1" height="23.9" fill="#0000ff" fill-opacity="0.6"/>
<rect x="483" y="884.8" width="1" height="23.9" fill="#0000ff" fill-opacity="0.95"/>
<rect x="484" y="884.8" width="1" height="23.9" fill="#0000ff" fill-opacity="0.95"/>
<rect x="485" y="884.8" width="1" height="23.9" fill="#0000ff" fill-opacity="0.95"/>
<rect x="487" y="884.8" width="1" height="23.9" fill="#0000ff" fill-opacity="0.95"/>
<rect x="488" y="884.8" width="1" height="23.9" fill="#0000ff" fill-opacity="0.95"/>
<rect x="489" y="884.8" width="1" height="23.9" fill="#0000ff" fill-opacity="0.95"/>
<rect x="490" y="884.8" width="1" height="23.9" fill="#0000ff" fill-opacity="0.95"/>
<rect x="491" y="884.8" width="1" height="23.9" fill="#0000ff" fill-opacity="0.6"/>
<rect x="492" y="884.8" width="1" height="23.9" fill="#0000ff" fill-opacity="0.6"/>
<rect x="493" y="884.8" width="1" height="23.9" fill="#0000ff" fill-opacity="0.95"/>
<rect x="494" y="884.8" width="1" height="23.9" fill="#0000ff" fill-opacity="0.95"/>
<rect x="495" y="884.8" width="1" height="23.9" fill="#0000ff" fill-opacity="0.6"/>
<rect x="496" y="884.8" width="1" height="23.9" fill="#0000ff" fill-opacity="0.95"/>
<rect x="497" y="884.8" width="1" height="23.9" fill="#0000ff" fill-opacity="0.6"/>
<rect x="498" y="884.8" width="1" height="23.9" fill="#0000ff" fill-opacity="0.95"/>
<rect x="499" y="884.8" width="1" height="23.9" fill="#0000ff" fill-opacity="0.6"/>
<rect x="512.60" y="884.8" width="3.90" height="23.9" fill="#0000ff" fill-opacity="0.25"/>
<rect x="513" y="884.8" width="1" height="23.9" fill="#0000ff" fill-opacity="0.95"/>
<rect x="514" y="884.8" width="1" height="23.9" fill="#0000ff" fill-opacity="0.95"/>
<rect x="515" y="884.8" width="1" height="23.9" fill="#0000ff" fill-opacity="0.95"/>
<rect x="516" y="884.8" width="1" height="23.9" fill="#0000ff" fill-opacity="0.95"/>
<rect x="519.00" y="884.8" width="2.00" height="23.9" fill="#0000ff" fill-opacity="0.82"/>
<rect x="169.00" y="907.40" width="48.00" height="1.2" fill="#0000ff" fill-opacity="0.75"/>
<rect x="220.30" y="884.75" width="3.00" height="1.2" fill="#0000ff" fill-opacity="0.8"/>
<rect x="225.80" y="884.75" width="1.70" height="1.2" fill="#0000ff" fill-opacity="0.8"/>
<rect x="240.80" y="861.70" width="13.20" height="1.2" fill="#0000ff" fill-opacity="0.8"/>
<rect x="270.00" y="884.75" width="174.00" height="1.2" fill="#0000ff" fill-opacity="0.8"/>
<rect x="500.70" y="907.40" width="302.30" height="1.2" fill="#0000ff" fill-opacity="0.75"/>
<text x="165" y="911.7" text-anchor="end" font-family="Liberation Serif" font-size="12.6" fill="#4d4d4d" letter-spacing="0.8">0</text>
<text x="165" y="865.9" text-anchor="end" font-family="Liberation Serif" font-size="12.6" fill="#4d4d4d" letter-spacing="0.8">2</text>
<text x="165" y="820.1" text-anchor="end" font-family="Liberation Serif" font-size="12.6" fill="#4d4d4d" letter-spacing="0.8">4</text>
<text x="165" y="774.4" text-anchor="end" font-family="Liberation Serif" font-size="12.6" fill="#4d4d4d" letter-spacing="0.8">6</text>
<text x="165" y="728.6" text-anchor="end" font-family="Liberation Serif" font-size="12.6" fill="#4d4d4d" letter-spacing="0.8">8</text>
<text x="165" y="682.8" text-anchor="end" font-family="Liberation Serif" font-size="12.6" fill="#4d4d4d" letter-spacing="0.8">10</text>
<text x="169.8" y="924" text-anchor="middle" font-family="Liberation Serif" font-size="12.6" fill="#4d4d4d" textLength="36.5" lengthAdjust="spacing">30000</text>
<text x="258.9" y="924" text-anchor="middle" font-family="Liberation Serif" font-size="12.6" fill="#4d4d4d" textLength="36.5" lengthAdjust="spacing">35000</text>
<text x="348.0" y="924" text-anchor="middle" font-family="Liberation Serif" font-size="12.6" fill="#4d4d4d" textLength="36.5" lengthAdjust="spacing">40000</text>
<text x="437.1" y="924" text-anchor="middle" font-family="Liberation Serif" font-size="12.6" fill="#4d4d4d" textLength="36.5" lengthAdjust="spacing">45000</text>
<text x="526.2" y="924" text-anchor="middle" font-family="Liberation Serif" font-size="12.6" fill="#4d4d4d" textLength="36.5" lengthAdjust="spacing">50000</text>
<text x="615.3" y="924" text-anchor="middle" font-family="Liberation Serif" font-size="12.6" fill="#4d4d4d" textLength="36.5" lengthAdjust="spacing">55000</text>
<text x="704.4" y="924" text-anchor="middle" font-family="Liberation Serif" font-size="12.6" fill="#4d4d4d" textLength="36.5" lengthAdjust="spacing">60000</text>
<text x="793.5" y="924" text-anchor="middle" font-family="Liberation Serif" font-size="12.6" fill="#4d4d4d" textLength="36.5" lengthAdjust="spacing">65000</text>
<rect x="697.5" y="687.5" width="14" height="11" fill="#fff" stroke="#ccc" stroke-width="1"/>
<rect x="699" y="689" width="12" height="8" fill="#00f"/>
<text x="716.4" y="697" font-family="Liberation Serif" font-size="12" fill="#808080" textLength="76.8" lengthAdjust="spacing">aida06 1.8.H</text>
<path d="M802.5 666.9 L813.5 677.9 L802.5 688.9 L791.5 677.9 Z" fill="#ff0000"/>
<line x1="1210.5" y1="678" x2="1210.5" y2="908" stroke="#d2d2d2" stroke-width="1"/>
<line x1="1299.5" y1="678" x2="1299.5" y2="908" stroke="#d2d2d2" stroke-width="1"/>
<line x1="1388.5" y1="678" x2="1388.5" y2="908" stroke="#d2d2d2" stroke-width="1"/>
<line x1="1477.5" y1="678" x2="1477.5" y2="908" stroke="#d2d2d2" stroke-width="1"/>
<line x1="1566.5" y1="678" x2="1566.5" y2="908" stroke="#d2d2d2" stroke-width="1"/>
<line x1="1655.5" y1="678" x2="1655.5" y2="908" stroke="#d2d2d2" stroke-width="1"/>
<line x1="1744.5" y1="678" x2="1744.5" y2="908" stroke="#d2d2d2" stroke-width="1"/>
<line x1="1122" y1="862.5" x2="1754" y2="862.5" stroke="#e0e0e0" stroke-width="1"/>
<line x1="1122" y1="816.5" x2="1754" y2="816.5" stroke="#e0e0e0" stroke-width="1"/>
<line x1="1122" y1="770.5" x2="1754" y2="770.5" stroke="#e0e0e0" stroke-width="1"/>
<line x1="1122" y1="724.5" x2="1754" y2="724.5" stroke="#e0e0e0" stroke-width="1"/>
<rect x="1121" y="677" width="634" height="232" fill="none" stroke="#000" stroke-width="2"/>
<rect x="1168.50" y="884.8" width="1.20" height="23.9" fill="#0000ff" fill-opacity="0.82"/>
<rect x="1169.00" y="861.7" width="1.25" height="24.3" fill="#0000ff" fill-opacity="0.82"/>
<rect x="1171.00" y="884.8" width="5.25" height="23.9" fill="#0000ff" fill-opacity="0.25"/>
<rect x="1171" y="884.8" width="1" height="23.9" fill="#0000ff" fill-opacity="0.95"/>
<rect x="1172" y="884.8" width="1" height="23.9" fill="#0000ff" fill-opacity="0.95"/>
<rect x="1174" y="884.8" width="1" height="23.9" fill="#0000ff" fill-opacity="0.6"/>
<rect x="1175" y="884.8" width="1" height="23.9" fill="#0000ff" fill-opacity="0.95"/>
<rect x="1177.50" y="861.7" width="1.25" height="24.3" fill="#0000ff" fill-opacity="0.82"/>
<rect x="1178.00" y="815.6" width="2.00" height="47.3" fill="#0000ff" fill-opacity="0.82"/>
<rect x="1178.75" y="792.5" width="1.85" height="47.3" fill="#0000ff" fill-opacity="0.82"/>
<rect x="1180.00" y="815.6" width="3.00" height="47.3" fill="#0000ff" fill-opacity="0.25"/>
<rect x="1180" y="815.6" width="1" height="47.3" fill="#0000ff" fill-opacity="0.95"/>
<rect x="1182" y="815.6" width="1" height="47.3" fill="#0000ff" fill-opacity="0.6"/>
<rect x="1183.00" y="838.6" width="2.60" height="24.2" fill="#0000ff" fill-opacity="0.82"/>
<rect x="1188.75" y="838.6" width="1.85" height="24.2" fill="#0000ff" fill-opacity="0.82"/>
<rect x="1193.75" y="861.7" width="2.50" height="24.3" fill="#0000ff" fill-opacity="0.82"/>
<rect x="1198.75" y="861.7" width="1.85" height="24.3" fill="#0000ff" fill-opacity="0.82"/>
<rect x="1208.75" y="884.8" width="1.85" height="23.9" fill="#0000ff" fill-opacity="0.82"/>
<rect x="1215.00" y="884.8" width="1.25" height="23.9" fill="#0000ff" fill-opacity="0.82"/>
<rect x="1223.00" y="884.8" width="5.75" height="23.9" fill="#0000ff" fill-opacity="0.25"/>
<rect x="1223" y="884.8" width="1" height="23.9" fill="#0000ff" fill-opacity="0.6"/>
<rect x="1224" y="884.8" width="1" height="23.9" fill="#0000ff" fill-opacity="0.95"/>
<rect x="1225" y="884.8" width="1" height="23.9" fill="#0000ff" fill-opacity="0.95"/>
<rect x="1226" y="884.8" width="1" height="23.9" fill="#0000ff" fill-opacity="0.6"/>
<rect x="1227" y="884.8" width="1" height="23.9" fill="#0000ff" fill-opacity="0.95"/>
<rect x="1228" y="884.8" width="1" height="23.9" fill="#0000ff" fill-opacity="0.6"/>
<rect x="1231.90" y="884.8" width="9.80" height="23.9" fill="#0000ff" fill-opacity="0.25"/>
<rect x="1232" y="884.8" width="1" height="23.9" fill="#0000ff" fill-opacity="0.6"/>
<rect x="1234" y="884.8" width="1" height="23.9" fill="#0000ff" fill-opacity="0.95"/>
<rect x="1235" y="884.8" width="1" height="23.9" fill="#0000ff" fill-opacity="0.95"/>
<rect x="1237" y="884.8" width="1" height="23.9" fill="#0000ff" fill-opacity="0.95"/>
<rect x="1239" y="884.8" width="1" height="23.9" fill="#0000ff" fill-opacity="0.95"/>
<rect x="1240" y="884.8" width="1" height="23.9" fill="#0000ff" fill-opacity="0.95"/>
<rect x="1236.00" y="861.7" width="2.00" height="24.3" fill="#0000ff" fill-opacity="0.82"/>
<rect x="1243.75" y="884.8" width="1.65" height="23.9" fill="#0000ff" fill-opacity="0.82"/>
<rect x="1252.00" y="884.8" width="1.75" height="23.9" fill="#0000ff" fill-opacity="0.82"/>
<rect x="1256.25" y="884.8" width="3.75" height="23.9" fill="#0000ff" fill-opacity="0.25"/>
<rect x="1256" y="884.8" width="1" height="23.9" fill="#0000ff" fill-opacity="0.95"/>
<rect x="1257" y="884.8" width="1" height="23.9" fill="#0000ff" fill-opacity="0.95"/>
<rect x="1258" y="884.8" width="1" height="23.9" fill="#0000ff" fill-opacity="0.6"/>
<rect x="1262.00" y="884.8" width="2.60" height="23.9" fill="#0000ff" fill-opacity="0.82"/>
<rect x="1268.30" y="884.8" width="5.00" height="23.9" fill="#0000ff" fill-opacity="0.25"/>
<rect x="1268" y="884.8" width="1" height="23.9" fill="#0000ff" fill-opacity="0.6"/>
<rect x="1270" y="884.8" width="1" height="23.9" fill="#0000ff" fill-opacity="0.95"/>
<rect x="1272" y="884.8" width="1" height="23.9" fill="#0000ff" fill-opacity="0.6"/>
<rect x="1273.30" y="884.8" width="5.70" height="23.9" fill="#0000ff" fill-opacity="0.25"/>
<rect x="1273" y="884.8" width="1" height="23.9" fill="#0000ff" fill-opacity="0.95"/>
<rect x="1274" y="884.8" width="1" height="23.9" fill="#0000ff" fill-opacity="0.95"/>
<rect x="1275" y="884.8" width="1" height="23.9" fill="#0000ff" fill-opacity="0.95"/>
<rect x="1276" y="884.8" width="1" height="23.9" fill="#0000ff" fill-opacity="0.95"/>
<rect x="1277" y="884.8" width="1" height="23.9" fill="#0000ff" fill-opacity="0.95"/>
<rect x="1283.00" y="884.8" width="4.00" height="23.9" fill="#0000ff" fill-opacity="0.25"/>
<rect x="1283" y="884.8" width="1" height="23.9" fill="#0000ff" fill-opacity="0.95"/>
<rect x="1284" y="884.8" width="1" height="23.9" fill="#0000ff" fill-opacity="0.6"/>
<rect x="1285" y="884.8" width="1" height="23.9" fill="#0000ff" fill-opacity="0.6"/>
<rect x="1290.80" y="884.8" width="3.80" height="23.9" fill="#0000ff" fill-opacity="0.25"/>
<rect x="1291" y="884.8" width="1" height="23.9" fill="#0000ff" fill-opacity="0.6"/>
<rect x="1292" y="884.8" width="1" height="23.9" fill="#0000ff" fill-opacity="0.95"/>
<rect x="1293" y="884.8" width="1" height="23.9" fill="#0000ff" fill-opacity="0.95"/>
<rect x="1298.75" y="884.8" width="1.25" height="23.9" fill="#0000ff" fill-opacity="0.82"/>
<rect x="1303.30" y="884.8" width="10.00" height="23.9" fill="#0000ff" fill-opacity="0.25"/>
<rect x="1303" y="884.8" width="1" height="23.9" fill="#0000ff" fill-opacity="0.95"/>
<rect x="1304" y="884.8" width="1" height="23.9" fill="#0000ff" fill-opacity="0.6"/>
<rect x="1305" y="884.8" width="1" height="23.9" fill="#0000ff" fill-opacity="0.95"/>
<rect x="1306" y="884.8" width="1" height="23.9" fill="#0000ff" fill-opacity="0.95"/>
<rect x="1307" y="884.8" width="1" height="23.9" fill="#0000ff" fill-opacity="0.95"/>
<rect x="1309" y="884.8" width="1" height="23.9" fill="#0000ff" fill-opacity="0.6"/>
<rect x="1310" y="884.8" width="1" height="23.9" fill="#0000ff" fill-opacity="0.95"/>
<rect x="1311" y="884.8" width="1" height="23.9" fill="#0000ff" fill-opacity="0.95"/>
<rect x="1314.00" y="884.8" width="2.25" height="23.9" fill="#0000ff" fill-opacity="0.82"/>
<rect x="1321.00" y="884.8" width="1.50" height="23.9" fill="#0000ff" fill-opacity="0.82"/>
<rect x="1326.00" y="884.8" width="7.00" height="23.9" fill="#0000ff" fill-opacity="0.25"/>
<rect x="1326" y="884.8" width="1" height="23.9" fill="#0000ff" fill-opacity="0.95"/>
<rect x="1327" y="884.8" width="1" height="23.9" fill="#0000ff" fill-opacity="0.95"/>
<rect x="1328" y="884.8" width="1" height="23.9" fill="#0000ff" fill-opacity="0.95"/>
<rect x="1329" y="884.8" width="1" height="23.9" fill="#0000ff" fill-opacity="0.95"/>
<rect x="1330" y="884.8" width="1" height="23.9" fill="#0000ff" fill-opacity="0.95"/>
<rect x="1331" y="884.8" width="1" height="23.9" fill="#0000ff" fill-opacity="0.95"/>
<rect x="1336.70" y="884.8" width="4.55" height="23.9" fill="#0000ff" fill-opacity="0.25"/>
<rect x="1337" y="884.8" width="1" height="23.9" fill="#0000ff" fill-opacity="0.95"/>
<rect x="1338" y="884.8" width="1" height="23.9" fill="#0000ff" fill-opacity="0.95"/>
<rect x="1339" y="884.8" width="1" height="23.9" fill="#0000ff" fill-opacity="0.95"/>
<rect x="1348.30" y="884.8" width="1.70" height="23.9" fill="#0000ff" fill-opacity="0.82"/>
<rect x="1352.00" y="884.8" width="1.75" height="23.9" fill="#0000ff" fill-opacity="0.82"/>
<rect x="1358.30" y="884.8" width="31.70" height="23.9" fill="#0000ff" fill-opacity="0.25"/>
<rect x="1358" y="884.8" width="1" height="23.9" fill="#0000ff" fill-opacity="0.95"/>
<rect x="1359" y="884.8" width="1" height="23.9" fill="#0000ff" fill-opacity="0.6"/>
<rect x="1360" y="884.8" width="1" height="23.9" fill="#0000ff" fill-opacity="0.95"/>
<rect x="1361" y="884.8" width="1" height="23.9" fill="#0000ff" fill-opacity="0.95"/>
<rect x="1362" y="884.8" width="1" height="23.9" fill="#0000ff" fill-opacity="0.95"/>
<rect x="1363" y="884.8" width="1" height="23.9" fill="#0000ff" fill-opacity="0.95"/>
<rect x="1364" y="884.8" width="1" height="23.9" fill="#0000ff" fill-opacity="0.95"/>
<rect x="1365" y="884.8" width="1" height="23.9" fill="#0000ff" fill-opacity="0.95"/>
<rect x="1366" y="884.8" width="1" height="23.9" fill="#0000ff" fill-opacity="0.95"/>
<rect x="1367" y="884.8" width="1" height="23.9" fill="#0000ff" fill-opacity="0.95"/>
<rect x="1368" y="884.8" width="1" height="23.9" fill="#0000ff" fill-opacity="0.95"/>
<rect x="1369" y="884.8" width="1" height="23.9" fill="#0000ff" fill-opacity="0.95"/>
<rect x="1370" y="884.8" width="1" height="23.9" fill="#0000ff" fill-opacity="0.95"/>
<rect x="1372" y="884.8" width="1" height="23.9" fill="#0000ff" fill-opacity="0.95"/>
<rect x="1373" y="884.8" width="1" height="23.9" fill="#0000ff" fill-opacity="0.95"/>
<rect x="1375" y="884.8" width="1" height="23.9" fill="#0000ff" fill-opacity="0.6"/>
<rect x="1376" y="884.8" width="1" height="23.9" fill="#0000ff" fill-opacity="0.6"/>
<rect x="1377" y="884.8" width="1" height="23.9" fill="#0000ff" fill-opacity="0.95"/>
<rect x="1378" y="884.8" width="1" height="23.9" fill="#0000ff" fill-opacity="0.95"/>
<rect x="1380" y="884.8" width="1" height="23.9" fill="#0000ff" fill-opacity="0.95"/>
<rect x="1381" y="884.8" width="1" height="23.9" fill="#0000ff" fill-opacity="0.6"/>
<rect x="1383" y="884.8" width="1" height="23.9" fill="#0000ff" fill-opacity="0.95"/>
<rect x="1384" y="884.8" width="1" height="23.9" fill="#0000ff" fill-opacity="0.95"/>
<rect x="1385" y="884.8" width="1" height="23.9" fill="#0000ff" fill-opacity="0.95"/>
<rect x="1386" y="884.8" width="1" height="23.9" fill="#0000ff" fill-opacity="0.95"/>
<rect x="1387" y="884.8" width="1" height="23.9" fill="#0000ff" fill-opacity="0.95"/>
<rect x="1388" y="884.8" width="1" height="23.9" fill="#0000ff" fill-opacity="0.95"/>
<rect x="1389" y="884.8" width="1" height="23.9" fill="#0000ff" fill-opacity="0.6"/>
<rect x="1392.50" y="884.8" width="2.50" height="23.9" fill="#0000ff" fill-opacity="0.82"/>
<rect x="1398.30" y="884.8" width="7.95" height="23.9" fill="#0000ff" fill-opacity="0.25"/>
<rect x="1398" y="884.8" width="1" height="23.9" fill="#0000ff" fill-opacity="0.95"/>
<rect x="1399" y="884.8" width="1" height="23.9" fill="#0000ff" fill-opacity="0.95"/>
<rect x="1401" y="884.8" width="1" height="23.9" fill="#0000ff" fill-opacity="0.95"/>
<rect x="1402" y="884.8" width="1" height="23.9" fill="#0000ff" fill-opacity="0.95"/>
<rect x="1403" y="884.8" width="1" height="23.9" fill="#0000ff" fill-opacity="0.95"/>
<rect x="1253.75" y="861.7" width="2.05" height="24.3" fill="#0000ff" fill-opacity="0.82"/>
<rect x="1266.70" y="861.7" width="1.60" height="24.3" fill="#0000ff" fill-opacity="0.82"/>
<rect x="1292.00" y="861.7" width="1.50" height="24.3" fill="#0000ff" fill-opacity="0.82"/>
<rect x="1296.00" y="861.7" width="1.50" height="24.3" fill="#0000ff" fill-opacity="0.82"/>
<rect x="1311.25" y="861.7" width="2.05" height="24.3" fill="#0000ff" fill-opacity="0.82"/>
<rect x="1318.75" y="861.7" width="1.65" height="24.3" fill="#0000ff" fill-opacity="0.82"/>
<rect x="1333.00" y="861.7" width="2.00" height="24.3" fill="#0000ff" fill-opacity="0.82"/>
<rect x="1408.00" y="884.8" width="3.25" height="23.9" fill="#0000ff" fill-opacity="0.25"/>
<rect x="1409" y="884.8" width="1" height="23.9" fill="#0000ff" fill-opacity="0.95"/>
<rect x="1410" y="884.8" width="1" height="23.9" fill="#0000ff" fill-opacity="0.95"/>
<rect x="1413.75" y="884.8" width="1.65" height="23.9" fill="#0000ff" fill-opacity="0.82"/>
<rect x="1417.00" y="884.8" width="4.70" height="23.9" fill="#0000ff" fill-opacity="0.25"/>
<rect x="1418" y="884.8" width="1" height="23.9" fill="#0000ff" fill-opacity="0.6"/>
<rect x="1419" y="884.8" width="1" height="23.9" fill="#0000ff" fill-opacity="0.95"/>
<rect x="1421" y="884.8" width="1" height="23.9" fill="#0000ff" fill-opacity="0.6"/>
<rect x="1425.40" y="884.8" width="2.90" height="23.9" fill="#0000ff" fill-opacity="0.25"/>
<rect x="1426" y="884.8" width="1" height="23.9" fill="#0000ff" fill-opacity="0.95"/>
<rect x="1427" y="884.8" width="1" height="23.9" fill="#0000ff" fill-opacity="0.6"/>
<rect x="1435.80" y="884.8" width="2.20" height="23.9" fill="#0000ff" fill-opacity="0.82"/>
<rect x="1439.60" y="884.8" width="2.90" height="23.9" fill="#0000ff" fill-opacity="0.25"/>
<rect x="1440" y="884.8" width="1" height="23.9" fill="#0000ff" fill-opacity="0.95"/>
<rect x="1442" y="884.8" width="1" height="23.9" fill="#0000ff" fill-opacity="0.95"/>
<rect x="1444.60" y="884.8" width="1.65" height="23.9" fill="#0000ff" fill-opacity="0.82"/>
<rect x="1448.30" y="884.8" width="1.70" height="23.9" fill="#0000ff" fill-opacity="0.82"/>
<rect x="1452.00" y="884.8" width="2.20" height="23.9" fill="#0000ff" fill-opacity="0.82"/>
<rect x="1121.00" y="907.40" width="47.50" height="1.2" fill="#0000ff" fill-opacity="0.75"/>
<rect x="1170.00" y="884.75" width="1.00" height="1.2" fill="#0000ff" fill-opacity="0.8"/>
<rect x="1176.25" y="884.75" width="1.75" height="1.2" fill="#0000ff" fill-opacity="0.8"/>
<rect x="1185.60" y="861.70" width="3.15" height="1.2" fill="#0000ff" fill-opacity="0.8"/>
<rect x="1190.60" y="861.70" width="3.15" height="1.2" fill="#0000ff" fill-opacity="0.8"/>
<rect x="1196.25" y="884.75" width="202.05" height="1.2" fill="#0000ff" fill-opacity="0.8"/>
<rect x="1398.30" y="907.40" width="356.70" height="1.2" fill="#0000ff" fill-opacity="0.75"/>
<text x="1117" y="911.7" text-anchor="end" font-family="Liberation Serif" font-size="12.6" fill="#4d4d4d" letter-spacing="0.8">0</text>
<text x="1117" y="865.9" text-anchor="end" font-family="Liberation Serif" font-size="12.6" fill="#4d4d4d" letter-spacing="0.8">2</text>
<text x="1117" y="820.1" text-anchor="end" font-family="Liberation Serif" font-size="12.6" fill="#4d4d4d" letter-spacing="0.8">4</text>
<text x="1117" y="774.4" text-anchor="end" font-family="Liberation Serif" font-size="12.6" fill="#4d4d4d" letter-spacing="0.8">6</text>
<text x="1117" y="728.6" text-anchor="end" font-family="Liberation Serif" font-size="12.6" fill="#4d4d4d" letter-spacing="0.8">8</text>
<text x="1117" y="682.8" text-anchor="end" font-family="Liberation Serif" font-size="12.6" fill="#4d4d4d" letter-spacing="0.8">10</text>
<text x="1121.8" y="924" text-anchor="middle" font-family="Liberation Serif" font-size="12.6" fill="#4d4d4d" textLength="36.5" lengthAdjust="spacing">30000</text>
<text x="1210.9" y="924" text-anchor="middle" font-family="Liberation Serif" font-size="12.6" fill="#4d4d4d" textLength="36.5" lengthAdjust="spacing">35000</text>
<text x="1300.0" y="924" text-anchor="middle" font-family="Liberation Serif" font-size="12.6" fill="#4d4d4d" textLength="36.5" lengthAdjust="spacing">40000</text>
<text x="1389.1" y="924" text-anchor="middle" font-family="Liberation Serif" font-size="12.6" fill="#4d4d4d" textLength="36.5" lengthAdjust="spacing">45000</text>
<text x="1478.2" y="924" text-anchor="middle" font-family="Liberation Serif" font-size="12.6" fill="#4d4d4d" textLength="36.5" lengthAdjust="spacing">50000</text>
<text x="1567.3" y="924" text-anchor="middle" font-family="Liberation Serif" font-size="12.6" fill="#4d4d4d" textLength="36.5" lengthAdjust="spacing">55000</text>
<text x="1656.4" y="924" text-anchor="middle" font-family="Liberation Serif" font-size="12.6" fill="#4d4d4d" textLength="36.5" lengthAdjust="spacing">60000</text>
<text x="1745.5" y="924" text-anchor="middle" font-family="Liberation Serif" font-size="12.6" fill="#4d4d4d" textLength="36.5" lengthAdjust="spacing">65000</text>
<rect x="1649.5" y="687.5" width="14" height="11" fill="#fff" stroke="#ccc" stroke-width="1"/>
<rect x="1651" y="689" width="12" height="8" fill="#00f"/>
<text x="1668.4" y="697" font-family="Liberation Serif" font-size="12" fill="#000" textLength="76.8" lengthAdjust="spacing">aida08 1.8.H</text>
<path d="M1754.5 666.9 L1765.5 677.9 L1754.5 688.9 L1743.5 677.9 Z" fill="#00ff00"/></svg>
</body></html>
